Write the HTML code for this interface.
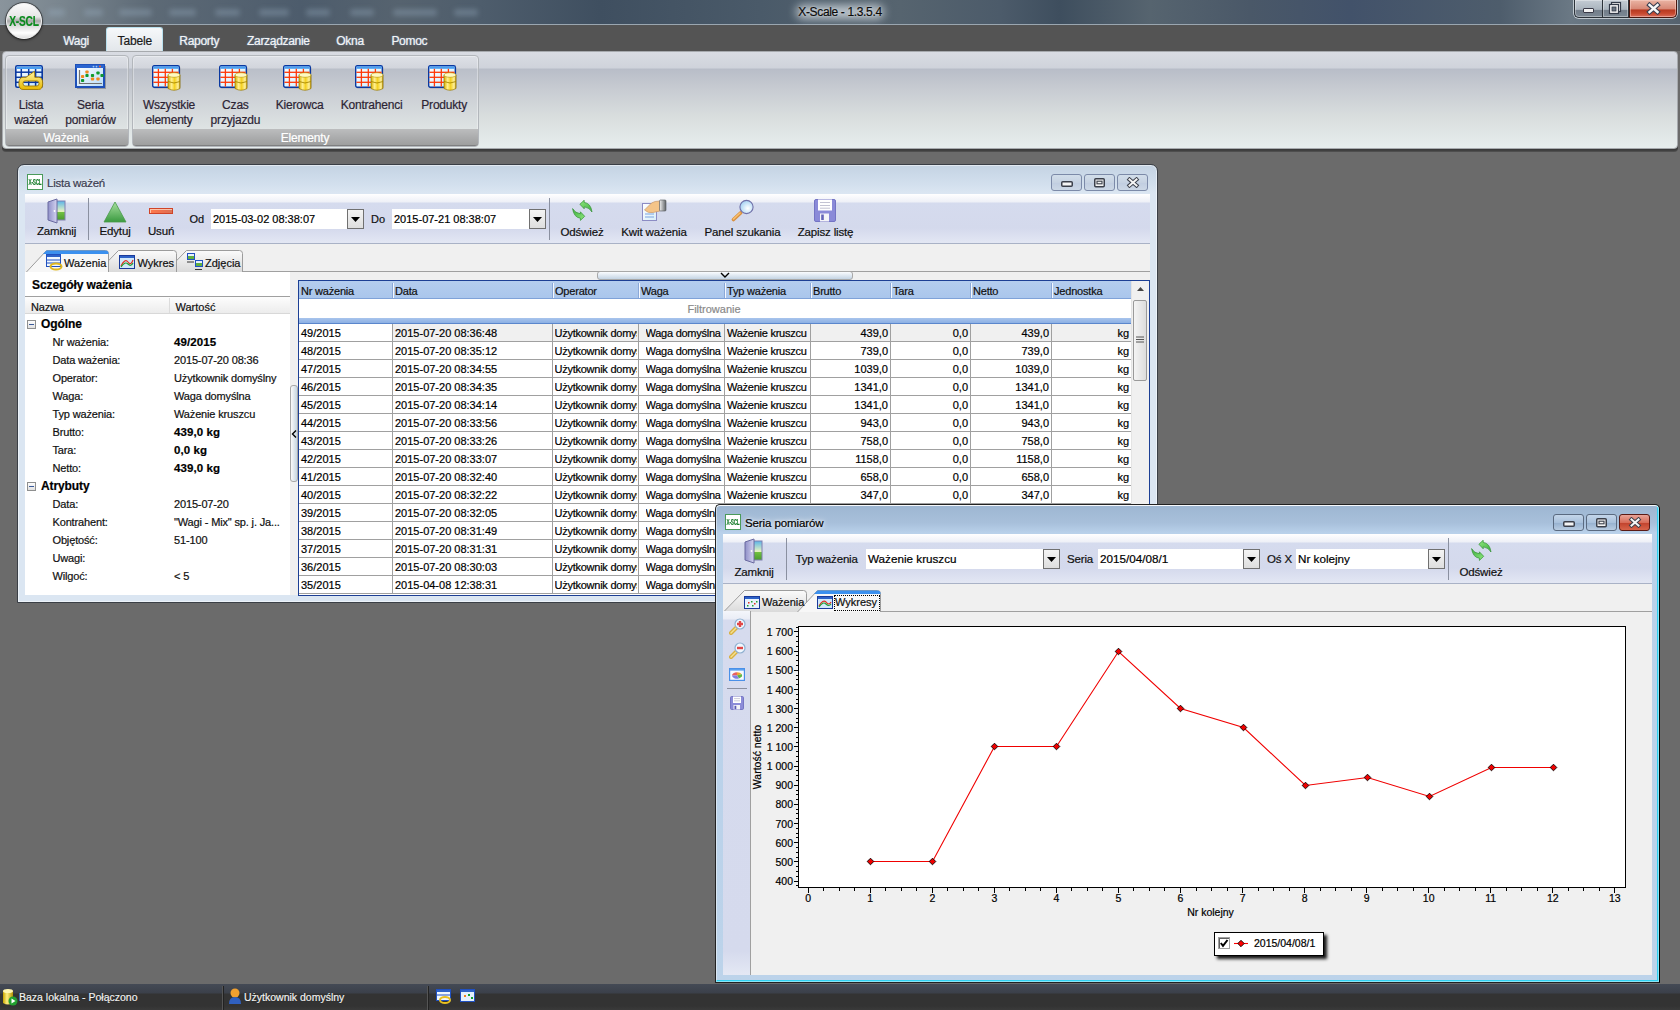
<!DOCTYPE html><html><head><meta charset="utf-8"><style>
html,body{margin:0;padding:0;}
body{width:1680px;height:1010px;overflow:hidden;position:relative;background:#6b6b6b;font-family:"Liberation Sans", sans-serif;}
div{box-sizing:border-box;-webkit-text-stroke:0.2px currentColor;}
</style></head><body>
<div style="position:absolute;left:0px;top:0px;width:1680px;height:25px;background:linear-gradient(90deg,#8a949c 0px,#7a868f 60px,#5d6a76 150px,#4d5c6c 300px,#56636f 400px,#4e5d6c 480px,#3f4f60 600px,#4a5a69 760px,#56646f 900px,#4c5b6a 1000px,#3e4e5e 1060px,#56646f 1150px,#4a5868 1250px,#42526a 1350px,#4e5d6c 1500px,#6a7884 1570px,#55626e 1680px);"></div>
<div style="position:absolute;left:0px;top:24px;width:1680px;height:1px;background:#9aa6b0;"></div>
<div style="position:absolute;left:796px;top:5px;width:88px;height:14px;background:rgba(225,232,238,0.75);filter:blur(5px);border-radius:7px;"></div>
<div style="position:absolute;left:690.00px;top:3.84px;width:300px;text-align:center;font-size:12px;line-height:16px;color:#0a0a0a;font-weight:400;white-space:pre;text-shadow:0 0 2px rgba(255,255,255,0.6);letter-spacing:-0.35px;">X-Scale - 1.3.5.4</div>
<div style="position:absolute;left:48px;top:9px;width:17px;height:7px;background:rgba(160,180,200,0.32);filter:blur(2.5px);border-radius:3px;"></div>
<div style="position:absolute;left:84px;top:9px;width:19px;height:7px;background:rgba(160,180,200,0.32);filter:blur(2.5px);border-radius:3px;"></div>
<div style="position:absolute;left:119px;top:9px;width:33px;height:7px;background:rgba(160,180,200,0.32);filter:blur(2.5px);border-radius:3px;"></div>
<div style="position:absolute;left:169px;top:9px;width:27px;height:7px;background:rgba(160,180,200,0.32);filter:blur(2.5px);border-radius:3px;"></div>
<div style="position:absolute;left:215px;top:9px;width:25px;height:7px;background:rgba(160,180,200,0.32);filter:blur(2.5px);border-radius:3px;"></div>
<div style="position:absolute;left:259px;top:9px;width:30px;height:7px;background:rgba(160,180,200,0.32);filter:blur(2.5px);border-radius:3px;"></div>
<div style="position:absolute;left:306px;top:9px;width:24px;height:7px;background:rgba(160,180,200,0.32);filter:blur(2.5px);border-radius:3px;"></div>
<div style="position:absolute;left:350px;top:9px;width:24px;height:7px;background:rgba(160,180,200,0.32);filter:blur(2.5px);border-radius:3px;"></div>
<div style="position:absolute;left:393px;top:9px;width:44px;height:7px;background:rgba(160,180,200,0.32);filter:blur(2.5px);border-radius:3px;"></div>
<div style="position:absolute;left:454px;top:9px;width:24px;height:7px;background:rgba(160,180,200,0.32);filter:blur(2.5px);border-radius:3px;"></div>
<div style="position:absolute;left:1573px;top:0px;width:105px;height:19px;background:transparent;border:1px solid rgba(230,236,240,0.7);border-top:none;border-radius:0 0 6px 6px;"></div>
<div style="position:absolute;left:1574px;top:0px;width:29px;height:18px;background:linear-gradient(#c4ccd4 0%,#aab4be 55%,#737e8a 62%,#7c8894 100%);border:1px solid #2c333a;border-top:none;border-right:none;border-radius:0 0 0 5px;box-shadow:inset 0 0 0 1px rgba(255,255,255,0.35);"></div>
<div style="position:absolute;left:1583px;top:8px;width:11px;height:5px;background:#f2f2f2;border:1px solid #3a3a48;border-radius:1px;"></div>
<div style="position:absolute;left:1602px;top:0px;width:27px;height:18px;background:linear-gradient(#c4ccd4 0%,#aab4be 55%,#737e8a 62%,#7c8894 100%);border:1px solid #2c333a;border-top:none;box-shadow:inset 0 0 0 1px rgba(255,255,255,0.35);"></div>
<svg style="position:absolute;left:1608px;top:1px" width="14" height="14" viewBox="0 0 14 14"><rect x="3.5" y="1.5" width="9" height="9" fill="#f4f4f4" stroke="#333a48" stroke-width="1.2"/><rect x="1.5" y="3.5" width="9" height="9" fill="#f4f4f4" stroke="#333a48" stroke-width="1.2"/><rect x="4" y="6" width="4" height="4" fill="#6a7480" stroke="#333a48" stroke-width="0.8"/></svg>
<div style="position:absolute;left:1629px;top:0px;width:48px;height:18px;background:linear-gradient(#eab4a4 0%,#d88a78 50%,#b83a22 60%,#c84a30 80%,#d87060 100%);border:1px solid #4a1810;border-top:none;border-radius:0 0 5px 0;box-shadow:inset 0 0 0 1px rgba(255,220,210,0.45);"></div>
<svg style="position:absolute;left:1646px;top:2px" width="15" height="13" viewBox="0 0 15 13"><path d="M3.5 3 L11.5 10 M11.5 3 L3.5 10" stroke="#3a3f50" stroke-width="4.6" stroke-linecap="square"/><path d="M3.5 3 L11.5 10 M11.5 3 L3.5 10" stroke="#f8f8f8" stroke-width="2.4" stroke-linecap="square"/></svg>
<div style="position:absolute;left:0px;top:25px;width:1680px;height:26px;background:#545454;"></div>
<div style="position:absolute;left:6px;top:3px;width:36px;height:36px;border-radius:50%;background:linear-gradient(#fbfbfb 0%,#e6e6e6 38%,#a8a8a8 50%,#d8d8d8 62%,#ffffff 85%,#e0e0e0 100%);border:1px solid #f4f4f4;box-shadow:0 0 0 1px rgba(40,40,40,0.6),0 1px 3px rgba(0,0,0,0.6);"></div>
<div style="position:absolute;left:-6.00px;top:10.80px;width:60px;text-align:center;font-size:15px;line-height:20px;color:#0b8a1e;font-weight:700;white-space:pre;letter-spacing:-0.3px;transform:scaleX(0.68);">X-SCL</div>
<div style="position:absolute;left:106px;top:27px;width:57px;height:25px;background:linear-gradient(#f6f8fa,#e2e6ea);border:1px solid #b9e0ee;border-bottom:none;border-radius:3px 3px 0 0;"></div>
<div style="position:absolute;left:63.20px;top:32.84px;font-size:12px;line-height:16px;color:#f4f4f4;font-weight:400;white-space:pre;letter-spacing:-0.3px;text-shadow:0 0 2px #6d8fb8;">Wagi</div>
<div style="position:absolute;left:117.60px;top:32.84px;font-size:12px;line-height:16px;color:#1a1a1a;font-weight:400;white-space:pre;letter-spacing:-0.15px;">Tabele</div>
<div style="position:absolute;left:179.30px;top:32.84px;font-size:12px;line-height:16px;color:#f4f4f4;font-weight:400;white-space:pre;letter-spacing:-0.3px;text-shadow:0 0 2px #6d8fb8;">Raporty</div>
<div style="position:absolute;left:247.00px;top:32.84px;font-size:12px;line-height:16px;color:#f4f4f4;font-weight:400;white-space:pre;letter-spacing:-0.3px;text-shadow:0 0 2px #6d8fb8;">Zarządzanie</div>
<div style="position:absolute;left:336.30px;top:32.84px;font-size:12px;line-height:16px;color:#f4f4f4;font-weight:400;white-space:pre;letter-spacing:-0.3px;text-shadow:0 0 2px #6d8fb8;">Okna</div>
<div style="position:absolute;left:391.40px;top:32.84px;font-size:12px;line-height:16px;color:#f4f4f4;font-weight:400;white-space:pre;letter-spacing:-0.3px;text-shadow:0 0 2px #6d8fb8;">Pomoc</div>
<div style="position:absolute;left:2px;top:51px;width:1676px;height:98px;background:linear-gradient(#d9dce3 0px,#cfd3db 16px,#b8bdc8 17px,#c6cad1 35px,#d9dede 65px,#e7eeee 97px);border:1px solid #a7aaae;border-radius:4px;box-shadow:0 1px 0 #3a3a3a,0 2px 0 #404040,0 3px 0 #4e4e4e;"></div>
<div style="position:absolute;left:5px;top:55px;width:124px;height:92px;background:linear-gradient(#dee1e7 0px,#d2d5dc 12px,#babfc9 13px,#c9cdd3 35px,#dfe4e4 74px);border:1px solid #b3b7bc;border-radius:4px;box-shadow:inset 0 0 0 1px rgba(255,255,255,0.35);"></div>
<div style="position:absolute;left:6px;top:129px;width:122px;height:17px;background:linear-gradient(#bcbdbe,#a9aaab 60%,#9e9f9f);border-bottom:1px solid #7e7f80;border-radius:0 0 3px 3px;"></div>
<div style="position:absolute;left:-84.00px;top:129.84px;width:300px;text-align:center;font-size:12px;line-height:16px;color:#ffffff;font-weight:400;white-space:pre;letter-spacing:-0.2px;">Ważenia</div>
<div style="position:absolute;left:132px;top:55px;width:347px;height:92px;background:linear-gradient(#dee1e7 0px,#d2d5dc 12px,#babfc9 13px,#c9cdd3 35px,#dfe4e4 74px);border:1px solid #b3b7bc;border-radius:4px;box-shadow:inset 0 0 0 1px rgba(255,255,255,0.35);"></div>
<div style="position:absolute;left:133px;top:129px;width:345px;height:17px;background:linear-gradient(#bcbdbe,#a9aaab 60%,#9e9f9f);border-bottom:1px solid #7e7f80;border-radius:0 0 3px 3px;"></div>
<div style="position:absolute;left:155.00px;top:129.84px;width:300px;text-align:center;font-size:12px;line-height:16px;color:#ffffff;font-weight:400;white-space:pre;letter-spacing:-0.2px;">Elementy</div>
<svg style="position:absolute;left:15px;top:65px" width="30" height="27" viewBox="0 0 30 27"><defs><linearGradient id="cel2" x1="0" y1="0" x2="1" y2="1"><stop offset="0" stop-color="#ffffff"/><stop offset="1" stop-color="#bfe4ff"/></linearGradient><linearGradient id="yl" x1="0" y1="0" x2="0" y2="1"><stop offset="0" stop-color="#fff6a0"/><stop offset="1" stop-color="#e8b800"/></linearGradient></defs><rect x="0.8" y="0.8" width="26.4" height="21.4" rx="1.5" fill="url(#cel2)" stroke="#0a38a0" stroke-width="1.6"/><rect x="1.6" y="1.6" width="24.8" height="2.4" fill="#4a9ef0"/><line x1="1" y1="7.2" x2="27" y2="7.2" stroke="#0a38a0" stroke-width="1.5"/><line x1="1" y1="12.3" x2="27" y2="12.3" stroke="#0a38a0" stroke-width="1.5"/><line x1="1" y1="17.3" x2="27" y2="17.3" stroke="#0a38a0" stroke-width="1.5"/><line x1="6.3" y1="4" x2="6.3" y2="22" stroke="#0a38a0" stroke-width="1.5"/><line x1="13.7" y1="4" x2="13.7" y2="22" stroke="#0a38a0" stroke-width="1.5"/><line x1="20.6" y1="4" x2="20.6" y2="22" stroke="#0a38a0" stroke-width="1.5"/><path d="M8 12.3 L11 12.3 L19.5 6.3 L19.8 12.3 L23.5 12.3 Q27.7 12.3 27.7 18.4 Q27.7 24.5 23.5 24.5 L8 24.5 Q3.9 24.5 3.9 18.4 Q3.9 12.3 8 12.3 Z M10 16 L22 16 Q24 16 24 18.5 Q24 21 22 21 L10 21 Q8 21 8 18.5 Q8 16 10 16 Z" fill="url(#yl)" fill-rule="evenodd" stroke="#a07800" stroke-width="0.9"/></svg>
<svg style="position:absolute;left:75px;top:64px" width="32" height="27" viewBox="0 0 32 27"><defs><linearGradient id="sp" x1="0" y1="0" x2="1" y2="1"><stop offset="0" stop-color="#ffffff"/><stop offset="1" stop-color="#b8dcf8"/></linearGradient></defs><rect x="2" y="2" width="29" height="23" fill="rgba(0,0,0,0.25)"/><rect x="1" y="1" width="28" height="22" fill="url(#sp)" stroke="#1e50b8" stroke-width="2"/><rect x="1" y="1" width="28" height="3" fill="#2a64d0"/><circle cx="25" cy="2.6" r="1" fill="#f06030"/><circle cx="21.5" cy="2.6" r="0.9" fill="#a0c8f0"/><circle cx="18.5" cy="2.6" r="0.9" fill="#a0c8f0"/><path d="M4.5 6 L4.5 19.5 L27 19.5" fill="none" stroke="#707070" stroke-width="1.2"/><rect x="10.4" y="6.4" width="3.2" height="3.2" rx="0.8" fill="#f08a20"/><rect x="6.0" y="10.9" width="3.2" height="3.2" rx="0.8" fill="#f08a20"/><rect x="10.4" y="9.9" width="3.2" height="3.2" rx="0.8" fill="#109a30"/><rect x="15.9" y="9.9" width="3.2" height="3.2" rx="0.8" fill="#109a30"/><rect x="21.4" y="7.4" width="3.2" height="3.2" rx="0.8" fill="#109a30"/><rect x="15.9" y="13.4" width="3.2" height="3.2" rx="0.8" fill="#f08a20"/><rect x="6.0" y="14.9" width="3.2" height="3.2" rx="0.8" fill="#109a30"/><rect x="21.4" y="13.4" width="3.2" height="3.2" rx="0.8" fill="#f08a20"/><rect x="25.4" y="9.9" width="3.2" height="3.2" rx="0.8" fill="#109a30"/></svg>
<svg style="position:absolute;left:152px;top:65px" width="30" height="27" viewBox="0 0 30 27"><defs><linearGradient id="cy" x1="0" x2="1"><stop offset="0" stop-color="#d8b000"/><stop offset="0.3" stop-color="#fff090"/><stop offset="0.55" stop-color="#f4d020"/><stop offset="0.85" stop-color="#fff2a0"/><stop offset="1" stop-color="#b89000"/></linearGradient><linearGradient id="cel" x1="0" y1="0" x2="1" y2="1"><stop offset="0" stop-color="#ffffff"/><stop offset="1" stop-color="#c8ecff"/></linearGradient></defs><rect x="1.5" y="1.5" width="27" height="22" rx="1.5" fill="rgba(0,0,0,0.18)"/><rect x="0.7" y="0.7" width="26.6" height="21.6" rx="1.5" fill="url(#cel)" stroke="#0a38a0" stroke-width="1.4"/><rect x="1.4" y="1.4" width="25.2" height="2.4" fill="#4a9ef0"/><line x1="1.4" y1="7.3" x2="26.6" y2="7.3" stroke="#ff3808" stroke-width="1.3"/><line x1="1.4" y1="12.3" x2="26.6" y2="12.3" stroke="#ff3808" stroke-width="1.3"/><line x1="1.4" y1="17.3" x2="26.6" y2="17.3" stroke="#ff3808" stroke-width="1.3"/><line x1="6.4" y1="3.8" x2="6.4" y2="21.6" stroke="#ff3808" stroke-width="1.3"/><line x1="13.3" y1="3.8" x2="13.3" y2="21.6" stroke="#ff3808" stroke-width="1.3"/><line x1="20.4" y1="3.8" x2="20.4" y2="21.6" stroke="#ff3808" stroke-width="1.3"/><path d="M16 10 Q22 7 28 10 L28 23.5 Q22 27 16 23.5 Z" fill="url(#cy)" stroke="#9a7a00" stroke-width="0.7"/><ellipse cx="22" cy="10" rx="6" ry="2.3" fill="#fff8c0" stroke="#b09000" stroke-width="0.6"/><path d="M16 16.5 Q22 19.5 28 16.5" fill="none" stroke="#a88800" stroke-width="0.9"/></svg>
<svg style="position:absolute;left:219px;top:65px" width="30" height="27" viewBox="0 0 30 27"><defs><linearGradient id="cy" x1="0" x2="1"><stop offset="0" stop-color="#d8b000"/><stop offset="0.3" stop-color="#fff090"/><stop offset="0.55" stop-color="#f4d020"/><stop offset="0.85" stop-color="#fff2a0"/><stop offset="1" stop-color="#b89000"/></linearGradient><linearGradient id="cel" x1="0" y1="0" x2="1" y2="1"><stop offset="0" stop-color="#ffffff"/><stop offset="1" stop-color="#c8ecff"/></linearGradient></defs><rect x="1.5" y="1.5" width="27" height="22" rx="1.5" fill="rgba(0,0,0,0.18)"/><rect x="0.7" y="0.7" width="26.6" height="21.6" rx="1.5" fill="url(#cel)" stroke="#0a38a0" stroke-width="1.4"/><rect x="1.4" y="1.4" width="25.2" height="2.4" fill="#4a9ef0"/><line x1="1.4" y1="7.3" x2="26.6" y2="7.3" stroke="#ff3808" stroke-width="1.3"/><line x1="1.4" y1="12.3" x2="26.6" y2="12.3" stroke="#ff3808" stroke-width="1.3"/><line x1="1.4" y1="17.3" x2="26.6" y2="17.3" stroke="#ff3808" stroke-width="1.3"/><line x1="6.4" y1="3.8" x2="6.4" y2="21.6" stroke="#ff3808" stroke-width="1.3"/><line x1="13.3" y1="3.8" x2="13.3" y2="21.6" stroke="#ff3808" stroke-width="1.3"/><line x1="20.4" y1="3.8" x2="20.4" y2="21.6" stroke="#ff3808" stroke-width="1.3"/><path d="M16 10 Q22 7 28 10 L28 23.5 Q22 27 16 23.5 Z" fill="url(#cy)" stroke="#9a7a00" stroke-width="0.7"/><ellipse cx="22" cy="10" rx="6" ry="2.3" fill="#fff8c0" stroke="#b09000" stroke-width="0.6"/><path d="M16 16.5 Q22 19.5 28 16.5" fill="none" stroke="#a88800" stroke-width="0.9"/></svg>
<svg style="position:absolute;left:283px;top:65px" width="30" height="27" viewBox="0 0 30 27"><defs><linearGradient id="cy" x1="0" x2="1"><stop offset="0" stop-color="#d8b000"/><stop offset="0.3" stop-color="#fff090"/><stop offset="0.55" stop-color="#f4d020"/><stop offset="0.85" stop-color="#fff2a0"/><stop offset="1" stop-color="#b89000"/></linearGradient><linearGradient id="cel" x1="0" y1="0" x2="1" y2="1"><stop offset="0" stop-color="#ffffff"/><stop offset="1" stop-color="#c8ecff"/></linearGradient></defs><rect x="1.5" y="1.5" width="27" height="22" rx="1.5" fill="rgba(0,0,0,0.18)"/><rect x="0.7" y="0.7" width="26.6" height="21.6" rx="1.5" fill="url(#cel)" stroke="#0a38a0" stroke-width="1.4"/><rect x="1.4" y="1.4" width="25.2" height="2.4" fill="#4a9ef0"/><line x1="1.4" y1="7.3" x2="26.6" y2="7.3" stroke="#ff3808" stroke-width="1.3"/><line x1="1.4" y1="12.3" x2="26.6" y2="12.3" stroke="#ff3808" stroke-width="1.3"/><line x1="1.4" y1="17.3" x2="26.6" y2="17.3" stroke="#ff3808" stroke-width="1.3"/><line x1="6.4" y1="3.8" x2="6.4" y2="21.6" stroke="#ff3808" stroke-width="1.3"/><line x1="13.3" y1="3.8" x2="13.3" y2="21.6" stroke="#ff3808" stroke-width="1.3"/><line x1="20.4" y1="3.8" x2="20.4" y2="21.6" stroke="#ff3808" stroke-width="1.3"/><path d="M16 10 Q22 7 28 10 L28 23.5 Q22 27 16 23.5 Z" fill="url(#cy)" stroke="#9a7a00" stroke-width="0.7"/><ellipse cx="22" cy="10" rx="6" ry="2.3" fill="#fff8c0" stroke="#b09000" stroke-width="0.6"/><path d="M16 16.5 Q22 19.5 28 16.5" fill="none" stroke="#a88800" stroke-width="0.9"/></svg>
<svg style="position:absolute;left:355px;top:65px" width="30" height="27" viewBox="0 0 30 27"><defs><linearGradient id="cy" x1="0" x2="1"><stop offset="0" stop-color="#d8b000"/><stop offset="0.3" stop-color="#fff090"/><stop offset="0.55" stop-color="#f4d020"/><stop offset="0.85" stop-color="#fff2a0"/><stop offset="1" stop-color="#b89000"/></linearGradient><linearGradient id="cel" x1="0" y1="0" x2="1" y2="1"><stop offset="0" stop-color="#ffffff"/><stop offset="1" stop-color="#c8ecff"/></linearGradient></defs><rect x="1.5" y="1.5" width="27" height="22" rx="1.5" fill="rgba(0,0,0,0.18)"/><rect x="0.7" y="0.7" width="26.6" height="21.6" rx="1.5" fill="url(#cel)" stroke="#0a38a0" stroke-width="1.4"/><rect x="1.4" y="1.4" width="25.2" height="2.4" fill="#4a9ef0"/><line x1="1.4" y1="7.3" x2="26.6" y2="7.3" stroke="#ff3808" stroke-width="1.3"/><line x1="1.4" y1="12.3" x2="26.6" y2="12.3" stroke="#ff3808" stroke-width="1.3"/><line x1="1.4" y1="17.3" x2="26.6" y2="17.3" stroke="#ff3808" stroke-width="1.3"/><line x1="6.4" y1="3.8" x2="6.4" y2="21.6" stroke="#ff3808" stroke-width="1.3"/><line x1="13.3" y1="3.8" x2="13.3" y2="21.6" stroke="#ff3808" stroke-width="1.3"/><line x1="20.4" y1="3.8" x2="20.4" y2="21.6" stroke="#ff3808" stroke-width="1.3"/><path d="M16 10 Q22 7 28 10 L28 23.5 Q22 27 16 23.5 Z" fill="url(#cy)" stroke="#9a7a00" stroke-width="0.7"/><ellipse cx="22" cy="10" rx="6" ry="2.3" fill="#fff8c0" stroke="#b09000" stroke-width="0.6"/><path d="M16 16.5 Q22 19.5 28 16.5" fill="none" stroke="#a88800" stroke-width="0.9"/></svg>
<svg style="position:absolute;left:428px;top:65px" width="30" height="27" viewBox="0 0 30 27"><defs><linearGradient id="cy" x1="0" x2="1"><stop offset="0" stop-color="#d8b000"/><stop offset="0.3" stop-color="#fff090"/><stop offset="0.55" stop-color="#f4d020"/><stop offset="0.85" stop-color="#fff2a0"/><stop offset="1" stop-color="#b89000"/></linearGradient><linearGradient id="cel" x1="0" y1="0" x2="1" y2="1"><stop offset="0" stop-color="#ffffff"/><stop offset="1" stop-color="#c8ecff"/></linearGradient></defs><rect x="1.5" y="1.5" width="27" height="22" rx="1.5" fill="rgba(0,0,0,0.18)"/><rect x="0.7" y="0.7" width="26.6" height="21.6" rx="1.5" fill="url(#cel)" stroke="#0a38a0" stroke-width="1.4"/><rect x="1.4" y="1.4" width="25.2" height="2.4" fill="#4a9ef0"/><line x1="1.4" y1="7.3" x2="26.6" y2="7.3" stroke="#ff3808" stroke-width="1.3"/><line x1="1.4" y1="12.3" x2="26.6" y2="12.3" stroke="#ff3808" stroke-width="1.3"/><line x1="1.4" y1="17.3" x2="26.6" y2="17.3" stroke="#ff3808" stroke-width="1.3"/><line x1="6.4" y1="3.8" x2="6.4" y2="21.6" stroke="#ff3808" stroke-width="1.3"/><line x1="13.3" y1="3.8" x2="13.3" y2="21.6" stroke="#ff3808" stroke-width="1.3"/><line x1="20.4" y1="3.8" x2="20.4" y2="21.6" stroke="#ff3808" stroke-width="1.3"/><path d="M16 10 Q22 7 28 10 L28 23.5 Q22 27 16 23.5 Z" fill="url(#cy)" stroke="#9a7a00" stroke-width="0.7"/><ellipse cx="22" cy="10" rx="6" ry="2.3" fill="#fff8c0" stroke="#b09000" stroke-width="0.6"/><path d="M16 16.5 Q22 19.5 28 16.5" fill="none" stroke="#a88800" stroke-width="0.9"/></svg>
<div style="position:absolute;left:-119.00px;top:96.84px;width:300px;text-align:center;font-size:12px;line-height:16px;color:#2c2434;font-weight:400;white-space:pre;letter-spacing:-0.2px;">Lista</div>
<div style="position:absolute;left:-119.00px;top:111.84px;width:300px;text-align:center;font-size:12px;line-height:16px;color:#2c2434;font-weight:400;white-space:pre;letter-spacing:-0.2px;">ważeń</div>
<div style="position:absolute;left:-59.50px;top:96.84px;width:300px;text-align:center;font-size:12px;line-height:16px;color:#2c2434;font-weight:400;white-space:pre;letter-spacing:-0.2px;">Seria</div>
<div style="position:absolute;left:-59.50px;top:111.84px;width:300px;text-align:center;font-size:12px;line-height:16px;color:#2c2434;font-weight:400;white-space:pre;letter-spacing:-0.2px;">pomiarów</div>
<div style="position:absolute;left:19.00px;top:96.84px;width:300px;text-align:center;font-size:12px;line-height:16px;color:#2c2434;font-weight:400;white-space:pre;letter-spacing:-0.2px;">Wszystkie</div>
<div style="position:absolute;left:19.00px;top:111.84px;width:300px;text-align:center;font-size:12px;line-height:16px;color:#2c2434;font-weight:400;white-space:pre;letter-spacing:-0.2px;">elementy</div>
<div style="position:absolute;left:85.40px;top:96.84px;width:300px;text-align:center;font-size:12px;line-height:16px;color:#2c2434;font-weight:400;white-space:pre;letter-spacing:-0.2px;">Czas</div>
<div style="position:absolute;left:85.40px;top:111.84px;width:300px;text-align:center;font-size:12px;line-height:16px;color:#2c2434;font-weight:400;white-space:pre;letter-spacing:-0.2px;">przyjazdu</div>
<div style="position:absolute;left:149.70px;top:96.84px;width:300px;text-align:center;font-size:12px;line-height:16px;color:#2c2434;font-weight:400;white-space:pre;letter-spacing:-0.2px;">Kierowca</div>
<div style="position:absolute;left:221.60px;top:96.84px;width:300px;text-align:center;font-size:12px;line-height:16px;color:#2c2434;font-weight:400;white-space:pre;letter-spacing:-0.2px;">Kontrahenci</div>
<div style="position:absolute;left:294.20px;top:96.84px;width:300px;text-align:center;font-size:12px;line-height:16px;color:#2c2434;font-weight:400;white-space:pre;letter-spacing:-0.2px;">Produkty</div>
<div style="position:absolute;left:0px;top:984px;width:1680px;height:26px;background:linear-gradient(#444a55 0px,#3b404a 9px,#333333 10px,#333333 22px,#3a3a3a 26px);"></div>
<svg style="position:absolute;left:2px;top:988px" width="16" height="18" viewBox="0 0 16 18"><defs><linearGradient id="cy2" x1="0" x2="1"><stop offset="0" stop-color="#c8a400"/><stop offset="0.4" stop-color="#fff080"/><stop offset="1" stop-color="#b09000"/></linearGradient></defs><path d="M1 3 Q6 0 11 3 L11 15 Q6 18 1 15 Z" fill="url(#cy2)"/><ellipse cx="6" cy="3" rx="5" ry="2" fill="#fff6b0"/><circle cx="11" cy="13" r="4.5" fill="#22a030"/><path d="M9.5 10.5 L13.5 13 L9.5 15.5 Z" fill="#fff"/></svg>
<div style="position:absolute;left:19.00px;top:990.36px;font-size:10.5px;line-height:14px;color:#f4f4f4;font-weight:400;white-space:pre;text-shadow:0 0 1px #000;">Baza lokalna - Połączono</div>
<div style="position:absolute;left:222px;top:986px;width:2px;height:24px;background:#555;border-right:1px solid #222;"></div>
<svg style="position:absolute;left:228px;top:988px" width="14" height="17" viewBox="0 0 14 17"><circle cx="7" cy="5" r="4.5" fill="#f0a030"/><path d="M1 16 Q1 9 7 9 Q13 9 13 16 Z" fill="#3060c0"/></svg>
<div style="position:absolute;left:244.00px;top:990.36px;font-size:10.5px;line-height:14px;color:#f4f4f4;font-weight:400;white-space:pre;text-shadow:0 0 1px #000;">Użytkownik domyślny</div>
<div style="position:absolute;left:427px;top:986px;width:2px;height:24px;background:#555;border-right:1px solid #222;"></div>
<svg style="position:absolute;left:436px;top:989px" width="16" height="15" viewBox="0 0 16 15"><rect x="0.5" y="0.5" width="14" height="11" fill="#f0f8ff" stroke="#2050c0"/><rect x="1" y="1" width="13" height="2" fill="#2d62c8"/><line x1="1" y1="6" x2="14" y2="6" stroke="#2050c0"/><ellipse cx="9" cy="11" rx="5" ry="3" fill="none" stroke="#e8c020" stroke-width="2"/></svg>
<svg style="position:absolute;left:460px;top:989px" width="16" height="14" viewBox="0 0 16 14"><rect x="0.5" y="0.5" width="14" height="12" fill="#e4f0fc" stroke="#2050c0"/><rect x="1" y="1" width="13" height="2" fill="#2d62c8"/><rect x="4" y="6" width="2" height="2" fill="#f08020"/><rect x="8" y="5" width="2" height="2" fill="#10a030"/><rect x="11" y="8" width="2" height="2" fill="#10a030"/></svg>
<div style="position:absolute;left:17px;top:164px;width:1141px;height:439px;background:linear-gradient(#c4d3e3 0px,#d3e0ee 20px,#dbe6f2 28px,#dbe6f2 100%);border:1px solid #3a3f46;border-radius:7px 7px 0 0;box-shadow:inset 0 0 0 1px rgba(255,255,255,0.5);"></div>
<div style="position:absolute;left:27px;top:174px;width:16px;height:16px;background:#fff;border:1px solid #4a9a5a;"></div>
<div style="position:absolute;left:20.00px;top:176.55px;width:30px;text-align:center;font-size:8.5px;line-height:11px;color:#1a7e2e;font-weight:700;white-space:pre;letter-spacing:-0.4px;transform:scaleX(0.55);">X-SCL</div>
<div style="position:absolute;left:47.00px;top:175.52px;font-size:11.5px;line-height:15px;color:#3c3c50;font-weight:400;white-space:pre;letter-spacing:-0.25px;text-shadow:0 0 6px #fff;">Lista ważeń</div>
<div style="position:absolute;left:1051px;top:174px;width:31px;height:17px;background:linear-gradient(#d2deea,#c6d2e2 50%,#c0cde0 51%,#ccd8e6);border:1px solid #7c8aa8;border-radius:3px;"></div>
<div style="position:absolute;left:1084px;top:174px;width:31px;height:17px;background:linear-gradient(#d2deea,#c6d2e2 50%,#c0cde0 51%,#ccd8e6);border:1px solid #7c8aa8;border-radius:3px;"></div>
<div style="position:absolute;left:1117px;top:174px;width:31px;height:17px;background:linear-gradient(#d2deea,#c6d2e2 50%,#c0cde0 51%,#ccd8e6);border:1px solid #7c8aa8;border-radius:3px;"></div>
<svg style="position:absolute;left:1061px;top:181px" width="13" height="7" viewBox="0 0 13 7"><rect x="0.75" y="0.75" width="10.5" height="4.5" rx="1" fill="#f4f4f4" stroke="#3a3f4a" stroke-width="1.5"/></svg>
<svg style="position:absolute;left:1094px;top:178px" width="13" height="10" viewBox="0 0 13 10"><rect x="0.75" y="0.75" width="9.5" height="8" rx="1" fill="#f4f4f4" stroke="#3a3f4a" stroke-width="1.5"/><rect x="3" y="3.2" width="5" height="2.6" fill="none" stroke="#3a3f4a" stroke-width="1.1"/></svg>
<svg style="position:absolute;left:1126px;top:177px" width="14" height="11" viewBox="0 0 14 11"><path d="M3.5 2.5 L10.5 8.5 M10.5 2.5 L3.5 8.5" stroke="#3a3f4a" stroke-width="4" stroke-linecap="square"/><path d="M3.5 2.5 L10.5 8.5 M10.5 2.5 L3.5 8.5" stroke="#f6f6f6" stroke-width="2" stroke-linecap="square"/></svg>
<div style="position:absolute;left:25px;top:194px;width:1125px;height:401px;background:#f0f0f0;"></div>
<div style="position:absolute;left:25px;top:194px;width:1125px;height:50px;background:linear-gradient(#ffffff 0px,#eef0f7 8px,#d5dbee 9px,#d4d9ec 34px,#e3e7f4 49px);border-bottom:1px solid #a9b2c6;"></div>
<svg style="position:absolute;left:47px;top:198px" width="20" height="26" viewBox="0 0 20 26"><defs><linearGradient id="dr" x1="0" x2="1"><stop offset="0" stop-color="#8f8fc8"/><stop offset="1" stop-color="#d4d4f0"/></linearGradient><linearGradient id="sky" x1="0" y1="0" x2="0" y2="1"><stop offset="0" stop-color="#5ab4e8"/><stop offset="0.55" stop-color="#e8f4c0"/><stop offset="0.6" stop-color="#70c040"/><stop offset="1" stop-color="#4a9a30"/></linearGradient></defs><rect x="9" y="3" width="9" height="19" fill="url(#sky)" stroke="#8080b0" stroke-width="1"/><path d="M1 4 L10 1 L10 25 L1 22 Z" fill="url(#dr)" stroke="#6a6aa0" stroke-width="1"/><circle cx="7.5" cy="13" r="0.9" fill="#fff"/></svg>
<div style="position:absolute;left:-93.50px;top:224.02px;width:300px;text-align:center;font-size:11.5px;line-height:15px;color:#101010;font-weight:400;white-space:pre;letter-spacing:-0.15px;">Zamknij</div>
<div style="position:absolute;left:88px;top:198px;width:1px;height:42px;background:#8a90a0;"></div>
<svg style="position:absolute;left:103px;top:201px" width="24" height="22" viewBox="0 0 24 22"><defs><linearGradient id="tr" x1="0" y1="0" x2="0" y2="1"><stop offset="0" stop-color="#a8e0a0"/><stop offset="1" stop-color="#3a9a40"/></linearGradient></defs><path d="M12 1 L23 21 L1 21 Z" fill="url(#tr)" stroke="#4a9a4a" stroke-width="0.8"/></svg>
<div style="position:absolute;left:-35.00px;top:224.02px;width:300px;text-align:center;font-size:11.5px;line-height:15px;color:#101010;font-weight:400;white-space:pre;letter-spacing:-0.15px;">Edytuj</div>
<div style="position:absolute;left:149px;top:208px;width:24px;height:6px;background:linear-gradient(90deg,#ff7a4c,#e87050 70%,#d87458);border:1px solid #d04428;box-shadow:inset 1px 1px 0 rgba(255,230,210,0.7);"></div>
<div style="position:absolute;left:11.00px;top:224.02px;width:300px;text-align:center;font-size:11.5px;line-height:15px;color:#101010;font-weight:400;white-space:pre;letter-spacing:-0.15px;">Usuń</div>
<div style="position:absolute;left:189.50px;top:212.19px;font-size:11px;line-height:14px;color:#101010;font-weight:400;white-space:pre;">Od</div>
<div style="position:absolute;left:211px;top:209px;width:153px;height:20px;background:#fff;"></div>
<div style="position:absolute;left:213.00px;top:212.19px;font-size:11px;line-height:14px;color:#000;font-weight:400;white-space:pre;">2015-03-02 08:38:07</div>
<div style="position:absolute;left:347px;top:209px;width:17px;height:20px;background:linear-gradient(#f4f4f4,#dedede);border:1px solid #707070;"></div>
<svg style="position:absolute;left:351px;top:217px" width="9" height="5" viewBox="0 0 9 5"><path d="M0 0 L9 0 L4.5 5 Z" fill="#000"/></svg>
<div style="position:absolute;left:371.00px;top:212.19px;font-size:11px;line-height:14px;color:#101010;font-weight:400;white-space:pre;">Do</div>
<div style="position:absolute;left:392px;top:209px;width:154px;height:20px;background:#fff;"></div>
<div style="position:absolute;left:394.00px;top:212.19px;font-size:11px;line-height:14px;color:#000;font-weight:400;white-space:pre;">2015-07-21 08:38:07</div>
<div style="position:absolute;left:529px;top:209px;width:17px;height:20px;background:linear-gradient(#f4f4f4,#dedede);border:1px solid #707070;"></div>
<svg style="position:absolute;left:533px;top:217px" width="9" height="5" viewBox="0 0 9 5"><path d="M0 0 L9 0 L4.5 5 Z" fill="#000"/></svg>
<div style="position:absolute;left:549px;top:198px;width:1px;height:42px;background:#8a90a0;"></div>
<svg style="position:absolute;left:572px;top:200px" width="23" height="23" viewBox="0 0 23 23"><defs><linearGradient id="ra" x1="0" y1="0" x2="1" y2="1"><stop offset="0" stop-color="#90e880"/><stop offset="1" stop-color="#3cae3c"/></linearGradient></defs><path d="M7.9 4.3 L12.2 0.2 L12.2 2.4 Q18.8 3.2 20 12 Q17.5 7.5 12.2 6.8 L12.2 8.8 Z" fill="url(#ra)" stroke="#2f8f2f" stroke-width="0.7" stroke-linejoin="round"/><path d="M7.9 4.3 L12.2 0.2 L12.2 2.4 Q18.8 3.2 20 12 Q17.5 7.5 12.2 6.8 L12.2 8.8 Z" transform="rotate(180 10.3 10.3)" fill="url(#ra)" stroke="#2f8f2f" stroke-width="0.7" stroke-linejoin="round"/></svg>
<div style="position:absolute;left:432.00px;top:224.52px;width:300px;text-align:center;font-size:11.5px;line-height:15px;color:#101010;font-weight:400;white-space:pre;letter-spacing:-0.15px;">Odśwież</div>
<svg style="position:absolute;left:641px;top:199px" width="27" height="23" viewBox="0 0 27 23"><defs><linearGradient id="dc" x1="0" y1="0" x2="1" y2="1"><stop offset="0" stop-color="#ffffff"/><stop offset="1" stop-color="#d8eef8"/></linearGradient><linearGradient id="cf" x1="0" x2="1"><stop offset="0" stop-color="#f0f0f0"/><stop offset="1" stop-color="#606468"/></linearGradient></defs><rect x="1.5" y="4.5" width="14" height="17" fill="url(#dc)" stroke="#8c8cc4"/><line x1="4" y1="15" x2="13" y2="15" stroke="#7aa4e0"/><line x1="4" y1="18" x2="13" y2="18" stroke="#7aa4e0"/><path d="M3.5 11 L10.5 4 Q13.5 2 19 2 L19 12 L12 13.5 Q7 14.5 3.5 11 Z" fill="#f4c488" stroke="#c89868" stroke-width="0.7"/><rect x="18.5" y="1" width="6.5" height="11" rx="1" fill="url(#cf)" stroke="#505458" stroke-width="0.6"/></svg>
<div style="position:absolute;left:504.00px;top:224.52px;width:300px;text-align:center;font-size:11.5px;line-height:15px;color:#101010;font-weight:400;white-space:pre;letter-spacing:-0.15px;">Kwit ważenia</div>
<svg style="position:absolute;left:731px;top:199px" width="24" height="23" viewBox="0 0 24 23"><defs><radialGradient id="gl" cx="0.6" cy="0.6" r="0.6"><stop offset="0" stop-color="#ffffff"/><stop offset="1" stop-color="#a8d4f4"/></radialGradient></defs><line x1="2.5" y1="20.5" x2="9.5" y2="14" stroke="#d89040" stroke-width="3.6" stroke-linecap="round"/><line x1="2.5" y1="20" x2="9" y2="14" stroke="#f8c070" stroke-width="1.6" stroke-linecap="round"/><circle cx="15.5" cy="8" r="6.6" fill="url(#gl)" stroke="#7070a8" stroke-width="1.1"/></svg>
<div style="position:absolute;left:592.50px;top:224.52px;width:300px;text-align:center;font-size:11.5px;line-height:15px;color:#101010;font-weight:400;white-space:pre;letter-spacing:-0.15px;">Panel szukania</div>
<svg style="position:absolute;left:814px;top:199px" width="22" height="23" viewBox="0 0 22 23"><rect x="0.5" y="0.5" width="21" height="22" rx="1.5" fill="#8a8ad8" stroke="#7474c4"/><rect x="4" y="0.5" width="14" height="11" fill="#ffffff"/><line x1="6" y1="3.5" x2="16" y2="3.5" stroke="#b4b4c8" stroke-width="0.8"/><line x1="6" y1="6.5" x2="16" y2="6.5" stroke="#b4b4c8" stroke-width="0.8"/><line x1="6" y1="9.2" x2="16" y2="9.2" stroke="#b4b4c8" stroke-width="0.8"/><rect x="6" y="14.5" width="9" height="8" fill="#f4f4f8"/><rect x="7.2" y="15.5" width="2.6" height="5.5" fill="#6464b8"/></svg>
<div style="position:absolute;left:675.50px;top:224.52px;width:300px;text-align:center;font-size:11.5px;line-height:15px;color:#101010;font-weight:400;white-space:pre;letter-spacing:-0.15px;">Zapisz listę</div>
<div style="position:absolute;left:25px;top:244px;width:1125px;height:28px;background:#f0f0f0;"></div>
<div style="position:absolute;left:108px;top:271px;width:1042px;height:1px;background:#a0a0a0;"></div>
<svg style="position:absolute;left:165px;top:250px" width="79" height="23" viewBox="0 0 79 23"><defs><linearGradient id="tgb" x1="0" y1="0" x2="0" y2="1"><stop offset="0" stop-color="#fbfbfb"/><stop offset="1" stop-color="#dadada"/></linearGradient></defs><path d="M0.5 22 L21.5 0.5 L74.5 0.5 Q77.5 0.5 77.5 3.5 L77.5 22" fill="url(#tgb)" stroke="#9c9c9c" stroke-width="1"/></svg>
<svg style="position:absolute;left:97px;top:250px" width="81" height="23" viewBox="0 0 81 23"><defs><linearGradient id="tga" x1="0" y1="0" x2="0" y2="1"><stop offset="0" stop-color="#fbfbfb"/><stop offset="1" stop-color="#dadada"/></linearGradient></defs><path d="M0.5 22 L21.5 0.5 L76.5 0.5 Q79.5 0.5 79.5 3.5 L79.5 22" fill="url(#tga)" stroke="#9c9c9c" stroke-width="1"/></svg>
<svg style="position:absolute;left:25px;top:250px" width="85" height="24" viewBox="0 0 85 24"><defs><linearGradient id="tgc" x1="0" y1="0" x2="0" y2="1"><stop offset="0" stop-color="#fbfbfb"/><stop offset="1" stop-color="#dadada"/></linearGradient></defs><path d="M0.5 23 L21.5 0.5 L80.5 0.5 Q83.5 0.5 83.5 3.5 L83.5 23" fill="#f7f7f7" stroke="#9c9c9c" stroke-width="1"/><path d="M21.5 0.5 L80.5 0.5 Q83.5 0.5 83.5 3.5 L83.5 4 L18 4 Z" fill="#3b90ee"/></svg>
<svg style="position:absolute;left:46px;top:254px" width="18" height="17" viewBox="0 0 18 17"><rect x="0.5" y="0.5" width="14" height="12" fill="#f0f8ff" stroke="#2050c0"/><rect x="1" y="1" width="13" height="2" fill="#2d62c8"/><line x1="1" y1="6" x2="14" y2="6" stroke="#2050c0"/><line x1="1" y1="9" x2="14" y2="9" stroke="#2050c0"/><ellipse cx="10" cy="12.5" rx="5.5" ry="3" fill="none" stroke="#e0b820" stroke-width="2"/></svg>
<div style="position:absolute;left:64.00px;top:256.19px;font-size:11px;line-height:14px;color:#101010;font-weight:400;white-space:pre;">Ważenia</div>
<svg style="position:absolute;left:119px;top:255px" width="16" height="14" viewBox="0 0 16 14"><rect x="0.5" y="0.5" width="15" height="13" fill="#d0e8fa" stroke="#1a3a9a"/><rect x="1" y="1" width="14" height="2" fill="#2d62c8"/><path d="M2 11 Q6 3 9 7 Q12 11 14 5" fill="none" stroke="#e03020" stroke-width="1.2"/><path d="M2 12 Q6 6 9 9 Q12 12 14 8" fill="none" stroke="#20a030" stroke-width="1.2"/></svg>
<div style="position:absolute;left:137.50px;top:256.19px;font-size:11px;line-height:14px;color:#101010;font-weight:400;white-space:pre;">Wykres</div>
<svg style="position:absolute;left:187px;top:253px" width="17" height="18" viewBox="0 0 17 18"><rect x="0.5" y="0.5" width="7" height="6" fill="#e8f0ff" stroke="#2050c0"/><rect x="1" y="3" width="6" height="3" fill="#60b040"/><line x1="0" y1="9" x2="7" y2="9" stroke="#333"/><rect x="8.5" y="7.5" width="7" height="6" fill="#e8f0ff" stroke="#2050c0"/><rect x="9" y="10" width="6" height="3" fill="#60b040"/><line x1="8" y1="16.5" x2="15" y2="16.5" stroke="#333"/></svg>
<div style="position:absolute;left:205.00px;top:256.19px;font-size:11px;line-height:14px;color:#101010;font-weight:400;white-space:pre;">Zdjęcia</div>
<div style="position:absolute;left:25px;top:272px;width:265px;height:323px;background:#fff;"></div>
<div style="position:absolute;left:32.00px;top:276.84px;font-size:12px;line-height:16px;color:#000;font-weight:700;white-space:pre;letter-spacing:-0.1px;">Sczegóły ważenia</div>
<div style="position:absolute;left:25px;top:296px;width:265px;height:1px;background:#a0a0a0;"></div>
<div style="position:absolute;left:25px;top:297px;width:265px;height:17px;background:linear-gradient(#fdfdfd,#ececec);border-bottom:1px solid #d8d8d8;"></div>
<div style="position:absolute;left:169px;top:298px;width:1px;height:15px;background:#dcdcdc;"></div>
<div style="position:absolute;left:31.00px;top:300.19px;font-size:11px;line-height:14px;color:#101010;font-weight:400;white-space:pre;letter-spacing:-0.2px;">Nazwa</div>
<div style="position:absolute;left:175.50px;top:300.19px;font-size:11px;line-height:14px;color:#101010;font-weight:400;white-space:pre;">Wartość</div>
<div style="position:absolute;left:27px;top:320px;width:9px;height:9px;background:linear-gradient(#fdfdfd,#e0e0e0);border:1px solid #8e8f8f;"></div>
<div style="position:absolute;left:29px;top:324px;width:5px;height:1px;background:#3a5a9a;"></div>
<div style="position:absolute;left:41.00px;top:315.84px;font-size:12px;line-height:16px;color:#000;font-weight:700;white-space:pre;letter-spacing:-0.1px;">Ogólne</div>
<div style="position:absolute;left:52.50px;top:335.19px;font-size:11px;line-height:14px;color:#101010;font-weight:400;white-space:pre;letter-spacing:-0.15px;">Nr ważenia:</div>
<div style="position:absolute;left:174.00px;top:334.52px;font-size:11.5px;line-height:15px;color:#000;font-weight:700;white-space:pre;letter-spacing:0.1px;">49/2015</div>
<div style="position:absolute;left:52.50px;top:353.19px;font-size:11px;line-height:14px;color:#101010;font-weight:400;white-space:pre;letter-spacing:-0.15px;">Data ważenia:</div>
<div style="position:absolute;left:174.00px;top:353.19px;font-size:11px;line-height:14px;color:#101010;font-weight:400;white-space:pre;letter-spacing:-0.15px;">2015-07-20 08:36</div>
<div style="position:absolute;left:52.50px;top:371.19px;font-size:11px;line-height:14px;color:#101010;font-weight:400;white-space:pre;letter-spacing:-0.15px;">Operator:</div>
<div style="position:absolute;left:174.00px;top:371.19px;font-size:11px;line-height:14px;color:#101010;font-weight:400;white-space:pre;letter-spacing:-0.15px;">Użytkownik domyślny</div>
<div style="position:absolute;left:52.50px;top:389.19px;font-size:11px;line-height:14px;color:#101010;font-weight:400;white-space:pre;letter-spacing:-0.15px;">Waga:</div>
<div style="position:absolute;left:174.00px;top:389.19px;font-size:11px;line-height:14px;color:#101010;font-weight:400;white-space:pre;letter-spacing:-0.15px;">Waga domyślna</div>
<div style="position:absolute;left:52.50px;top:407.19px;font-size:11px;line-height:14px;color:#101010;font-weight:400;white-space:pre;letter-spacing:-0.15px;">Typ ważenia:</div>
<div style="position:absolute;left:174.00px;top:407.19px;font-size:11px;line-height:14px;color:#101010;font-weight:400;white-space:pre;letter-spacing:-0.15px;">Ważenie kruszcu</div>
<div style="position:absolute;left:52.50px;top:425.19px;font-size:11px;line-height:14px;color:#101010;font-weight:400;white-space:pre;letter-spacing:-0.15px;">Brutto:</div>
<div style="position:absolute;left:174.00px;top:424.52px;font-size:11.5px;line-height:15px;color:#000;font-weight:700;white-space:pre;letter-spacing:0.1px;">439,0 kg</div>
<div style="position:absolute;left:52.50px;top:443.19px;font-size:11px;line-height:14px;color:#101010;font-weight:400;white-space:pre;letter-spacing:-0.15px;">Tara:</div>
<div style="position:absolute;left:174.00px;top:442.52px;font-size:11.5px;line-height:15px;color:#000;font-weight:700;white-space:pre;letter-spacing:0.1px;">0,0 kg</div>
<div style="position:absolute;left:52.50px;top:461.19px;font-size:11px;line-height:14px;color:#101010;font-weight:400;white-space:pre;letter-spacing:-0.15px;">Netto:</div>
<div style="position:absolute;left:174.00px;top:460.52px;font-size:11.5px;line-height:15px;color:#000;font-weight:700;white-space:pre;letter-spacing:0.1px;">439,0 kg</div>
<div style="position:absolute;left:27px;top:482px;width:9px;height:9px;background:linear-gradient(#fdfdfd,#e0e0e0);border:1px solid #8e8f8f;"></div>
<div style="position:absolute;left:29px;top:486px;width:5px;height:1px;background:#3a5a9a;"></div>
<div style="position:absolute;left:41.00px;top:477.84px;font-size:12px;line-height:16px;color:#000;font-weight:700;white-space:pre;letter-spacing:-0.1px;">Atrybuty</div>
<div style="position:absolute;left:52.50px;top:497.19px;font-size:11px;line-height:14px;color:#101010;font-weight:400;white-space:pre;letter-spacing:-0.15px;">Data:</div>
<div style="position:absolute;left:174.00px;top:497.19px;font-size:11px;line-height:14px;color:#101010;font-weight:400;white-space:pre;letter-spacing:-0.15px;">2015-07-20</div>
<div style="position:absolute;left:52.50px;top:515.19px;font-size:11px;line-height:14px;color:#101010;font-weight:400;white-space:pre;letter-spacing:-0.15px;">Kontrahent:</div>
<div style="position:absolute;left:174.00px;top:515.19px;font-size:11px;line-height:14px;color:#101010;font-weight:400;white-space:pre;letter-spacing:-0.15px;">"Wagi - Mix" sp. j. Ja...</div>
<div style="position:absolute;left:52.50px;top:533.19px;font-size:11px;line-height:14px;color:#101010;font-weight:400;white-space:pre;letter-spacing:-0.15px;">Objętość:</div>
<div style="position:absolute;left:174.00px;top:533.19px;font-size:11px;line-height:14px;color:#101010;font-weight:400;white-space:pre;letter-spacing:-0.15px;">51-100</div>
<div style="position:absolute;left:52.50px;top:551.19px;font-size:11px;line-height:14px;color:#101010;font-weight:400;white-space:pre;letter-spacing:-0.15px;">Uwagi:</div>
<div style="position:absolute;left:174.00px;top:551.19px;font-size:11px;line-height:14px;color:#101010;font-weight:400;white-space:pre;letter-spacing:-0.15px;"></div>
<div style="position:absolute;left:52.50px;top:569.19px;font-size:11px;line-height:14px;color:#101010;font-weight:400;white-space:pre;letter-spacing:-0.15px;">Wilgoć:</div>
<div style="position:absolute;left:174.00px;top:569.19px;font-size:11px;line-height:14px;color:#101010;font-weight:400;white-space:pre;letter-spacing:-0.15px;">&lt; 5</div>
<div style="position:absolute;left:290px;top:272px;width:8px;height:323px;background:#f0f0f0;"></div>
<div style="position:absolute;left:290px;top:385px;width:8px;height:97px;background:linear-gradient(90deg,#fafafa,#c8d6e0);border:1px solid #a8a8a8;border-radius:3px;"></div>
<svg style="position:absolute;left:291px;top:430px" width="6" height="8" viewBox="0 0 6 8"><path d="M5 0.5 L1.5 4 L5 7.5" fill="none" stroke="#000" stroke-width="1.4"/></svg>
<div style="position:absolute;left:597px;top:271px;width:256px;height:9px;background:linear-gradient(#fafcff,#c4d4e4);border:1px solid #a8a8a8;border-radius:3px;"></div>
<svg style="position:absolute;left:720px;top:272px" width="10" height="6" viewBox="0 0 10 6"><path d="M1 1 L5 5 L9 1" fill="none" stroke="#000" stroke-width="1.4"/></svg>
<div style="position:absolute;left:298px;top:280px;width:852px;height:316px;background:#fff;border:1px solid #1c3f94;"></div>
<div style="position:absolute;left:299px;top:281px;width:832px;height:18px;background:linear-gradient(#b4cdee,#aac6ec);border-bottom:1px solid #7fa2d8;"></div>
<div style="position:absolute;left:301.00px;top:284.19px;font-size:11px;line-height:14px;color:#101010;font-weight:400;white-space:pre;letter-spacing:-0.2px;">Nr ważenia</div>
<div style="position:absolute;left:392px;top:283px;width:1px;height:15px;background:#f4f8ff;border-left:1px solid #8aa8d8;width:2px;"></div>
<div style="position:absolute;left:395.00px;top:284.19px;font-size:11px;line-height:14px;color:#101010;font-weight:400;white-space:pre;letter-spacing:-0.2px;">Data</div>
<div style="position:absolute;left:552px;top:283px;width:1px;height:15px;background:#f4f8ff;border-left:1px solid #8aa8d8;width:2px;"></div>
<div style="position:absolute;left:555.00px;top:284.19px;font-size:11px;line-height:14px;color:#101010;font-weight:400;white-space:pre;letter-spacing:-0.2px;">Operator</div>
<div style="position:absolute;left:638px;top:283px;width:1px;height:15px;background:#f4f8ff;border-left:1px solid #8aa8d8;width:2px;"></div>
<div style="position:absolute;left:641.00px;top:284.19px;font-size:11px;line-height:14px;color:#101010;font-weight:400;white-space:pre;letter-spacing:-0.2px;">Waga</div>
<div style="position:absolute;left:724px;top:283px;width:1px;height:15px;background:#f4f8ff;border-left:1px solid #8aa8d8;width:2px;"></div>
<div style="position:absolute;left:727.00px;top:284.19px;font-size:11px;line-height:14px;color:#101010;font-weight:400;white-space:pre;letter-spacing:-0.2px;">Typ ważenia</div>
<div style="position:absolute;left:810px;top:283px;width:1px;height:15px;background:#f4f8ff;border-left:1px solid #8aa8d8;width:2px;"></div>
<div style="position:absolute;left:813.00px;top:284.19px;font-size:11px;line-height:14px;color:#101010;font-weight:400;white-space:pre;letter-spacing:-0.2px;">Brutto</div>
<div style="position:absolute;left:890px;top:283px;width:1px;height:15px;background:#f4f8ff;border-left:1px solid #8aa8d8;width:2px;"></div>
<div style="position:absolute;left:893.00px;top:284.19px;font-size:11px;line-height:14px;color:#101010;font-weight:400;white-space:pre;letter-spacing:-0.2px;">Tara</div>
<div style="position:absolute;left:970px;top:283px;width:1px;height:15px;background:#f4f8ff;border-left:1px solid #8aa8d8;width:2px;"></div>
<div style="position:absolute;left:973.00px;top:284.19px;font-size:11px;line-height:14px;color:#101010;font-weight:400;white-space:pre;letter-spacing:-0.2px;">Netto</div>
<div style="position:absolute;left:1051px;top:283px;width:1px;height:15px;background:#f4f8ff;border-left:1px solid #8aa8d8;width:2px;"></div>
<div style="position:absolute;left:1054.00px;top:284.19px;font-size:11px;line-height:14px;color:#101010;font-weight:400;white-space:pre;letter-spacing:-0.2px;">Jednostka</div>
<div style="position:absolute;left:299px;top:299px;width:832px;height:19px;background:#fff;"></div>
<div style="position:absolute;left:654.00px;top:302.19px;width:120px;text-align:center;font-size:11px;line-height:14px;color:#8a8a8a;font-weight:400;white-space:pre;">Filtrowanie</div>
<div style="position:absolute;left:299px;top:318px;width:832px;height:6px;background:linear-gradient(#a8c4ec,#8cb0e4);border-bottom:1px solid #5a86cc;"></div>
<div style="position:absolute;left:393px;top:324px;width:738px;height:17px;background:#f0f0f0;"></div>
<div style="position:absolute;left:299px;top:341px;width:832px;height:1px;background:#a0a0a0;"></div>
<div style="position:absolute;left:392px;top:324px;width:1px;height:18px;background:#a0a0a0;"></div>
<div style="position:absolute;left:552px;top:324px;width:1px;height:18px;background:#a0a0a0;"></div>
<div style="position:absolute;left:638px;top:324px;width:1px;height:18px;background:#a0a0a0;"></div>
<div style="position:absolute;left:724px;top:324px;width:1px;height:18px;background:#a0a0a0;"></div>
<div style="position:absolute;left:810px;top:324px;width:1px;height:18px;background:#a0a0a0;"></div>
<div style="position:absolute;left:890px;top:324px;width:1px;height:18px;background:#a0a0a0;"></div>
<div style="position:absolute;left:970px;top:324px;width:1px;height:18px;background:#a0a0a0;"></div>
<div style="position:absolute;left:1051px;top:324px;width:1px;height:18px;background:#a0a0a0;"></div>
<div style="position:absolute;left:301.00px;top:326.19px;font-size:11px;line-height:14px;color:#000;font-weight:400;white-space:pre;">49/2015</div>
<div style="position:absolute;left:395.00px;top:326.19px;font-size:11px;line-height:14px;color:#000;font-weight:400;white-space:pre;">2015-07-20 08:36:48</div>
<div style="position:absolute;left:554.50px;top:326.19px;width:82px;overflow:hidden;font-size:11px;line-height:14px;color:#000;font-weight:400;white-space:pre;letter-spacing:-0.25px;">Użytkownik domyślny</div>
<div style="position:absolute;left:645.50px;top:326.19px;width:79px;overflow:hidden;font-size:11px;line-height:14px;color:#000;font-weight:400;white-space:pre;letter-spacing:-0.25px;">Waga domyślna</div>
<div style="position:absolute;left:727.00px;top:326.19px;width:82px;overflow:hidden;font-size:11px;line-height:14px;color:#000;font-weight:400;white-space:pre;letter-spacing:-0.25px;">Ważenie kruszcu</div>
<div style="position:absolute;left:818.00px;top:326.19px;width:70px;text-align:right;font-size:11px;line-height:14px;color:#000;font-weight:400;white-space:pre;">439,0</div>
<div style="position:absolute;left:898.00px;top:326.19px;width:70px;text-align:right;font-size:11px;line-height:14px;color:#000;font-weight:400;white-space:pre;">0,0</div>
<div style="position:absolute;left:979.00px;top:326.19px;width:70px;text-align:right;font-size:11px;line-height:14px;color:#000;font-weight:400;white-space:pre;">439,0</div>
<div style="position:absolute;left:1059.00px;top:326.19px;width:70px;text-align:right;font-size:11px;line-height:14px;color:#000;font-weight:400;white-space:pre;">kg</div>
<div style="position:absolute;left:299px;top:359px;width:832px;height:1px;background:#a0a0a0;"></div>
<div style="position:absolute;left:392px;top:342px;width:1px;height:18px;background:#a0a0a0;"></div>
<div style="position:absolute;left:552px;top:342px;width:1px;height:18px;background:#a0a0a0;"></div>
<div style="position:absolute;left:638px;top:342px;width:1px;height:18px;background:#a0a0a0;"></div>
<div style="position:absolute;left:724px;top:342px;width:1px;height:18px;background:#a0a0a0;"></div>
<div style="position:absolute;left:810px;top:342px;width:1px;height:18px;background:#a0a0a0;"></div>
<div style="position:absolute;left:890px;top:342px;width:1px;height:18px;background:#a0a0a0;"></div>
<div style="position:absolute;left:970px;top:342px;width:1px;height:18px;background:#a0a0a0;"></div>
<div style="position:absolute;left:1051px;top:342px;width:1px;height:18px;background:#a0a0a0;"></div>
<div style="position:absolute;left:301.00px;top:344.19px;font-size:11px;line-height:14px;color:#000;font-weight:400;white-space:pre;">48/2015</div>
<div style="position:absolute;left:395.00px;top:344.19px;font-size:11px;line-height:14px;color:#000;font-weight:400;white-space:pre;">2015-07-20 08:35:12</div>
<div style="position:absolute;left:554.50px;top:344.19px;width:82px;overflow:hidden;font-size:11px;line-height:14px;color:#000;font-weight:400;white-space:pre;letter-spacing:-0.25px;">Użytkownik domyślny</div>
<div style="position:absolute;left:645.50px;top:344.19px;width:79px;overflow:hidden;font-size:11px;line-height:14px;color:#000;font-weight:400;white-space:pre;letter-spacing:-0.25px;">Waga domyślna</div>
<div style="position:absolute;left:727.00px;top:344.19px;width:82px;overflow:hidden;font-size:11px;line-height:14px;color:#000;font-weight:400;white-space:pre;letter-spacing:-0.25px;">Ważenie kruszcu</div>
<div style="position:absolute;left:818.00px;top:344.19px;width:70px;text-align:right;font-size:11px;line-height:14px;color:#000;font-weight:400;white-space:pre;">739,0</div>
<div style="position:absolute;left:898.00px;top:344.19px;width:70px;text-align:right;font-size:11px;line-height:14px;color:#000;font-weight:400;white-space:pre;">0,0</div>
<div style="position:absolute;left:979.00px;top:344.19px;width:70px;text-align:right;font-size:11px;line-height:14px;color:#000;font-weight:400;white-space:pre;">739,0</div>
<div style="position:absolute;left:1059.00px;top:344.19px;width:70px;text-align:right;font-size:11px;line-height:14px;color:#000;font-weight:400;white-space:pre;">kg</div>
<div style="position:absolute;left:299px;top:377px;width:832px;height:1px;background:#a0a0a0;"></div>
<div style="position:absolute;left:392px;top:360px;width:1px;height:18px;background:#a0a0a0;"></div>
<div style="position:absolute;left:552px;top:360px;width:1px;height:18px;background:#a0a0a0;"></div>
<div style="position:absolute;left:638px;top:360px;width:1px;height:18px;background:#a0a0a0;"></div>
<div style="position:absolute;left:724px;top:360px;width:1px;height:18px;background:#a0a0a0;"></div>
<div style="position:absolute;left:810px;top:360px;width:1px;height:18px;background:#a0a0a0;"></div>
<div style="position:absolute;left:890px;top:360px;width:1px;height:18px;background:#a0a0a0;"></div>
<div style="position:absolute;left:970px;top:360px;width:1px;height:18px;background:#a0a0a0;"></div>
<div style="position:absolute;left:1051px;top:360px;width:1px;height:18px;background:#a0a0a0;"></div>
<div style="position:absolute;left:301.00px;top:362.19px;font-size:11px;line-height:14px;color:#000;font-weight:400;white-space:pre;">47/2015</div>
<div style="position:absolute;left:395.00px;top:362.19px;font-size:11px;line-height:14px;color:#000;font-weight:400;white-space:pre;">2015-07-20 08:34:55</div>
<div style="position:absolute;left:554.50px;top:362.19px;width:82px;overflow:hidden;font-size:11px;line-height:14px;color:#000;font-weight:400;white-space:pre;letter-spacing:-0.25px;">Użytkownik domyślny</div>
<div style="position:absolute;left:645.50px;top:362.19px;width:79px;overflow:hidden;font-size:11px;line-height:14px;color:#000;font-weight:400;white-space:pre;letter-spacing:-0.25px;">Waga domyślna</div>
<div style="position:absolute;left:727.00px;top:362.19px;width:82px;overflow:hidden;font-size:11px;line-height:14px;color:#000;font-weight:400;white-space:pre;letter-spacing:-0.25px;">Ważenie kruszcu</div>
<div style="position:absolute;left:818.00px;top:362.19px;width:70px;text-align:right;font-size:11px;line-height:14px;color:#000;font-weight:400;white-space:pre;">1039,0</div>
<div style="position:absolute;left:898.00px;top:362.19px;width:70px;text-align:right;font-size:11px;line-height:14px;color:#000;font-weight:400;white-space:pre;">0,0</div>
<div style="position:absolute;left:979.00px;top:362.19px;width:70px;text-align:right;font-size:11px;line-height:14px;color:#000;font-weight:400;white-space:pre;">1039,0</div>
<div style="position:absolute;left:1059.00px;top:362.19px;width:70px;text-align:right;font-size:11px;line-height:14px;color:#000;font-weight:400;white-space:pre;">kg</div>
<div style="position:absolute;left:299px;top:395px;width:832px;height:1px;background:#a0a0a0;"></div>
<div style="position:absolute;left:392px;top:378px;width:1px;height:18px;background:#a0a0a0;"></div>
<div style="position:absolute;left:552px;top:378px;width:1px;height:18px;background:#a0a0a0;"></div>
<div style="position:absolute;left:638px;top:378px;width:1px;height:18px;background:#a0a0a0;"></div>
<div style="position:absolute;left:724px;top:378px;width:1px;height:18px;background:#a0a0a0;"></div>
<div style="position:absolute;left:810px;top:378px;width:1px;height:18px;background:#a0a0a0;"></div>
<div style="position:absolute;left:890px;top:378px;width:1px;height:18px;background:#a0a0a0;"></div>
<div style="position:absolute;left:970px;top:378px;width:1px;height:18px;background:#a0a0a0;"></div>
<div style="position:absolute;left:1051px;top:378px;width:1px;height:18px;background:#a0a0a0;"></div>
<div style="position:absolute;left:301.00px;top:380.19px;font-size:11px;line-height:14px;color:#000;font-weight:400;white-space:pre;">46/2015</div>
<div style="position:absolute;left:395.00px;top:380.19px;font-size:11px;line-height:14px;color:#000;font-weight:400;white-space:pre;">2015-07-20 08:34:35</div>
<div style="position:absolute;left:554.50px;top:380.19px;width:82px;overflow:hidden;font-size:11px;line-height:14px;color:#000;font-weight:400;white-space:pre;letter-spacing:-0.25px;">Użytkownik domyślny</div>
<div style="position:absolute;left:645.50px;top:380.19px;width:79px;overflow:hidden;font-size:11px;line-height:14px;color:#000;font-weight:400;white-space:pre;letter-spacing:-0.25px;">Waga domyślna</div>
<div style="position:absolute;left:727.00px;top:380.19px;width:82px;overflow:hidden;font-size:11px;line-height:14px;color:#000;font-weight:400;white-space:pre;letter-spacing:-0.25px;">Ważenie kruszcu</div>
<div style="position:absolute;left:818.00px;top:380.19px;width:70px;text-align:right;font-size:11px;line-height:14px;color:#000;font-weight:400;white-space:pre;">1341,0</div>
<div style="position:absolute;left:898.00px;top:380.19px;width:70px;text-align:right;font-size:11px;line-height:14px;color:#000;font-weight:400;white-space:pre;">0,0</div>
<div style="position:absolute;left:979.00px;top:380.19px;width:70px;text-align:right;font-size:11px;line-height:14px;color:#000;font-weight:400;white-space:pre;">1341,0</div>
<div style="position:absolute;left:1059.00px;top:380.19px;width:70px;text-align:right;font-size:11px;line-height:14px;color:#000;font-weight:400;white-space:pre;">kg</div>
<div style="position:absolute;left:299px;top:413px;width:832px;height:1px;background:#a0a0a0;"></div>
<div style="position:absolute;left:392px;top:396px;width:1px;height:18px;background:#a0a0a0;"></div>
<div style="position:absolute;left:552px;top:396px;width:1px;height:18px;background:#a0a0a0;"></div>
<div style="position:absolute;left:638px;top:396px;width:1px;height:18px;background:#a0a0a0;"></div>
<div style="position:absolute;left:724px;top:396px;width:1px;height:18px;background:#a0a0a0;"></div>
<div style="position:absolute;left:810px;top:396px;width:1px;height:18px;background:#a0a0a0;"></div>
<div style="position:absolute;left:890px;top:396px;width:1px;height:18px;background:#a0a0a0;"></div>
<div style="position:absolute;left:970px;top:396px;width:1px;height:18px;background:#a0a0a0;"></div>
<div style="position:absolute;left:1051px;top:396px;width:1px;height:18px;background:#a0a0a0;"></div>
<div style="position:absolute;left:301.00px;top:398.19px;font-size:11px;line-height:14px;color:#000;font-weight:400;white-space:pre;">45/2015</div>
<div style="position:absolute;left:395.00px;top:398.19px;font-size:11px;line-height:14px;color:#000;font-weight:400;white-space:pre;">2015-07-20 08:34:14</div>
<div style="position:absolute;left:554.50px;top:398.19px;width:82px;overflow:hidden;font-size:11px;line-height:14px;color:#000;font-weight:400;white-space:pre;letter-spacing:-0.25px;">Użytkownik domyślny</div>
<div style="position:absolute;left:645.50px;top:398.19px;width:79px;overflow:hidden;font-size:11px;line-height:14px;color:#000;font-weight:400;white-space:pre;letter-spacing:-0.25px;">Waga domyślna</div>
<div style="position:absolute;left:727.00px;top:398.19px;width:82px;overflow:hidden;font-size:11px;line-height:14px;color:#000;font-weight:400;white-space:pre;letter-spacing:-0.25px;">Ważenie kruszcu</div>
<div style="position:absolute;left:818.00px;top:398.19px;width:70px;text-align:right;font-size:11px;line-height:14px;color:#000;font-weight:400;white-space:pre;">1341,0</div>
<div style="position:absolute;left:898.00px;top:398.19px;width:70px;text-align:right;font-size:11px;line-height:14px;color:#000;font-weight:400;white-space:pre;">0,0</div>
<div style="position:absolute;left:979.00px;top:398.19px;width:70px;text-align:right;font-size:11px;line-height:14px;color:#000;font-weight:400;white-space:pre;">1341,0</div>
<div style="position:absolute;left:1059.00px;top:398.19px;width:70px;text-align:right;font-size:11px;line-height:14px;color:#000;font-weight:400;white-space:pre;">kg</div>
<div style="position:absolute;left:299px;top:431px;width:832px;height:1px;background:#a0a0a0;"></div>
<div style="position:absolute;left:392px;top:414px;width:1px;height:18px;background:#a0a0a0;"></div>
<div style="position:absolute;left:552px;top:414px;width:1px;height:18px;background:#a0a0a0;"></div>
<div style="position:absolute;left:638px;top:414px;width:1px;height:18px;background:#a0a0a0;"></div>
<div style="position:absolute;left:724px;top:414px;width:1px;height:18px;background:#a0a0a0;"></div>
<div style="position:absolute;left:810px;top:414px;width:1px;height:18px;background:#a0a0a0;"></div>
<div style="position:absolute;left:890px;top:414px;width:1px;height:18px;background:#a0a0a0;"></div>
<div style="position:absolute;left:970px;top:414px;width:1px;height:18px;background:#a0a0a0;"></div>
<div style="position:absolute;left:1051px;top:414px;width:1px;height:18px;background:#a0a0a0;"></div>
<div style="position:absolute;left:301.00px;top:416.19px;font-size:11px;line-height:14px;color:#000;font-weight:400;white-space:pre;">44/2015</div>
<div style="position:absolute;left:395.00px;top:416.19px;font-size:11px;line-height:14px;color:#000;font-weight:400;white-space:pre;">2015-07-20 08:33:56</div>
<div style="position:absolute;left:554.50px;top:416.19px;width:82px;overflow:hidden;font-size:11px;line-height:14px;color:#000;font-weight:400;white-space:pre;letter-spacing:-0.25px;">Użytkownik domyślny</div>
<div style="position:absolute;left:645.50px;top:416.19px;width:79px;overflow:hidden;font-size:11px;line-height:14px;color:#000;font-weight:400;white-space:pre;letter-spacing:-0.25px;">Waga domyślna</div>
<div style="position:absolute;left:727.00px;top:416.19px;width:82px;overflow:hidden;font-size:11px;line-height:14px;color:#000;font-weight:400;white-space:pre;letter-spacing:-0.25px;">Ważenie kruszcu</div>
<div style="position:absolute;left:818.00px;top:416.19px;width:70px;text-align:right;font-size:11px;line-height:14px;color:#000;font-weight:400;white-space:pre;">943,0</div>
<div style="position:absolute;left:898.00px;top:416.19px;width:70px;text-align:right;font-size:11px;line-height:14px;color:#000;font-weight:400;white-space:pre;">0,0</div>
<div style="position:absolute;left:979.00px;top:416.19px;width:70px;text-align:right;font-size:11px;line-height:14px;color:#000;font-weight:400;white-space:pre;">943,0</div>
<div style="position:absolute;left:1059.00px;top:416.19px;width:70px;text-align:right;font-size:11px;line-height:14px;color:#000;font-weight:400;white-space:pre;">kg</div>
<div style="position:absolute;left:299px;top:449px;width:832px;height:1px;background:#a0a0a0;"></div>
<div style="position:absolute;left:392px;top:432px;width:1px;height:18px;background:#a0a0a0;"></div>
<div style="position:absolute;left:552px;top:432px;width:1px;height:18px;background:#a0a0a0;"></div>
<div style="position:absolute;left:638px;top:432px;width:1px;height:18px;background:#a0a0a0;"></div>
<div style="position:absolute;left:724px;top:432px;width:1px;height:18px;background:#a0a0a0;"></div>
<div style="position:absolute;left:810px;top:432px;width:1px;height:18px;background:#a0a0a0;"></div>
<div style="position:absolute;left:890px;top:432px;width:1px;height:18px;background:#a0a0a0;"></div>
<div style="position:absolute;left:970px;top:432px;width:1px;height:18px;background:#a0a0a0;"></div>
<div style="position:absolute;left:1051px;top:432px;width:1px;height:18px;background:#a0a0a0;"></div>
<div style="position:absolute;left:301.00px;top:434.19px;font-size:11px;line-height:14px;color:#000;font-weight:400;white-space:pre;">43/2015</div>
<div style="position:absolute;left:395.00px;top:434.19px;font-size:11px;line-height:14px;color:#000;font-weight:400;white-space:pre;">2015-07-20 08:33:26</div>
<div style="position:absolute;left:554.50px;top:434.19px;width:82px;overflow:hidden;font-size:11px;line-height:14px;color:#000;font-weight:400;white-space:pre;letter-spacing:-0.25px;">Użytkownik domyślny</div>
<div style="position:absolute;left:645.50px;top:434.19px;width:79px;overflow:hidden;font-size:11px;line-height:14px;color:#000;font-weight:400;white-space:pre;letter-spacing:-0.25px;">Waga domyślna</div>
<div style="position:absolute;left:727.00px;top:434.19px;width:82px;overflow:hidden;font-size:11px;line-height:14px;color:#000;font-weight:400;white-space:pre;letter-spacing:-0.25px;">Ważenie kruszcu</div>
<div style="position:absolute;left:818.00px;top:434.19px;width:70px;text-align:right;font-size:11px;line-height:14px;color:#000;font-weight:400;white-space:pre;">758,0</div>
<div style="position:absolute;left:898.00px;top:434.19px;width:70px;text-align:right;font-size:11px;line-height:14px;color:#000;font-weight:400;white-space:pre;">0,0</div>
<div style="position:absolute;left:979.00px;top:434.19px;width:70px;text-align:right;font-size:11px;line-height:14px;color:#000;font-weight:400;white-space:pre;">758,0</div>
<div style="position:absolute;left:1059.00px;top:434.19px;width:70px;text-align:right;font-size:11px;line-height:14px;color:#000;font-weight:400;white-space:pre;">kg</div>
<div style="position:absolute;left:299px;top:467px;width:832px;height:1px;background:#a0a0a0;"></div>
<div style="position:absolute;left:392px;top:450px;width:1px;height:18px;background:#a0a0a0;"></div>
<div style="position:absolute;left:552px;top:450px;width:1px;height:18px;background:#a0a0a0;"></div>
<div style="position:absolute;left:638px;top:450px;width:1px;height:18px;background:#a0a0a0;"></div>
<div style="position:absolute;left:724px;top:450px;width:1px;height:18px;background:#a0a0a0;"></div>
<div style="position:absolute;left:810px;top:450px;width:1px;height:18px;background:#a0a0a0;"></div>
<div style="position:absolute;left:890px;top:450px;width:1px;height:18px;background:#a0a0a0;"></div>
<div style="position:absolute;left:970px;top:450px;width:1px;height:18px;background:#a0a0a0;"></div>
<div style="position:absolute;left:1051px;top:450px;width:1px;height:18px;background:#a0a0a0;"></div>
<div style="position:absolute;left:301.00px;top:452.19px;font-size:11px;line-height:14px;color:#000;font-weight:400;white-space:pre;">42/2015</div>
<div style="position:absolute;left:395.00px;top:452.19px;font-size:11px;line-height:14px;color:#000;font-weight:400;white-space:pre;">2015-07-20 08:33:07</div>
<div style="position:absolute;left:554.50px;top:452.19px;width:82px;overflow:hidden;font-size:11px;line-height:14px;color:#000;font-weight:400;white-space:pre;letter-spacing:-0.25px;">Użytkownik domyślny</div>
<div style="position:absolute;left:645.50px;top:452.19px;width:79px;overflow:hidden;font-size:11px;line-height:14px;color:#000;font-weight:400;white-space:pre;letter-spacing:-0.25px;">Waga domyślna</div>
<div style="position:absolute;left:727.00px;top:452.19px;width:82px;overflow:hidden;font-size:11px;line-height:14px;color:#000;font-weight:400;white-space:pre;letter-spacing:-0.25px;">Ważenie kruszcu</div>
<div style="position:absolute;left:818.00px;top:452.19px;width:70px;text-align:right;font-size:11px;line-height:14px;color:#000;font-weight:400;white-space:pre;">1158,0</div>
<div style="position:absolute;left:898.00px;top:452.19px;width:70px;text-align:right;font-size:11px;line-height:14px;color:#000;font-weight:400;white-space:pre;">0,0</div>
<div style="position:absolute;left:979.00px;top:452.19px;width:70px;text-align:right;font-size:11px;line-height:14px;color:#000;font-weight:400;white-space:pre;">1158,0</div>
<div style="position:absolute;left:1059.00px;top:452.19px;width:70px;text-align:right;font-size:11px;line-height:14px;color:#000;font-weight:400;white-space:pre;">kg</div>
<div style="position:absolute;left:299px;top:485px;width:832px;height:1px;background:#a0a0a0;"></div>
<div style="position:absolute;left:392px;top:468px;width:1px;height:18px;background:#a0a0a0;"></div>
<div style="position:absolute;left:552px;top:468px;width:1px;height:18px;background:#a0a0a0;"></div>
<div style="position:absolute;left:638px;top:468px;width:1px;height:18px;background:#a0a0a0;"></div>
<div style="position:absolute;left:724px;top:468px;width:1px;height:18px;background:#a0a0a0;"></div>
<div style="position:absolute;left:810px;top:468px;width:1px;height:18px;background:#a0a0a0;"></div>
<div style="position:absolute;left:890px;top:468px;width:1px;height:18px;background:#a0a0a0;"></div>
<div style="position:absolute;left:970px;top:468px;width:1px;height:18px;background:#a0a0a0;"></div>
<div style="position:absolute;left:1051px;top:468px;width:1px;height:18px;background:#a0a0a0;"></div>
<div style="position:absolute;left:301.00px;top:470.19px;font-size:11px;line-height:14px;color:#000;font-weight:400;white-space:pre;">41/2015</div>
<div style="position:absolute;left:395.00px;top:470.19px;font-size:11px;line-height:14px;color:#000;font-weight:400;white-space:pre;">2015-07-20 08:32:40</div>
<div style="position:absolute;left:554.50px;top:470.19px;width:82px;overflow:hidden;font-size:11px;line-height:14px;color:#000;font-weight:400;white-space:pre;letter-spacing:-0.25px;">Użytkownik domyślny</div>
<div style="position:absolute;left:645.50px;top:470.19px;width:79px;overflow:hidden;font-size:11px;line-height:14px;color:#000;font-weight:400;white-space:pre;letter-spacing:-0.25px;">Waga domyślna</div>
<div style="position:absolute;left:727.00px;top:470.19px;width:82px;overflow:hidden;font-size:11px;line-height:14px;color:#000;font-weight:400;white-space:pre;letter-spacing:-0.25px;">Ważenie kruszcu</div>
<div style="position:absolute;left:818.00px;top:470.19px;width:70px;text-align:right;font-size:11px;line-height:14px;color:#000;font-weight:400;white-space:pre;">658,0</div>
<div style="position:absolute;left:898.00px;top:470.19px;width:70px;text-align:right;font-size:11px;line-height:14px;color:#000;font-weight:400;white-space:pre;">0,0</div>
<div style="position:absolute;left:979.00px;top:470.19px;width:70px;text-align:right;font-size:11px;line-height:14px;color:#000;font-weight:400;white-space:pre;">658,0</div>
<div style="position:absolute;left:1059.00px;top:470.19px;width:70px;text-align:right;font-size:11px;line-height:14px;color:#000;font-weight:400;white-space:pre;">kg</div>
<div style="position:absolute;left:299px;top:503px;width:832px;height:1px;background:#a0a0a0;"></div>
<div style="position:absolute;left:392px;top:486px;width:1px;height:18px;background:#a0a0a0;"></div>
<div style="position:absolute;left:552px;top:486px;width:1px;height:18px;background:#a0a0a0;"></div>
<div style="position:absolute;left:638px;top:486px;width:1px;height:18px;background:#a0a0a0;"></div>
<div style="position:absolute;left:724px;top:486px;width:1px;height:18px;background:#a0a0a0;"></div>
<div style="position:absolute;left:810px;top:486px;width:1px;height:18px;background:#a0a0a0;"></div>
<div style="position:absolute;left:890px;top:486px;width:1px;height:18px;background:#a0a0a0;"></div>
<div style="position:absolute;left:970px;top:486px;width:1px;height:18px;background:#a0a0a0;"></div>
<div style="position:absolute;left:1051px;top:486px;width:1px;height:18px;background:#a0a0a0;"></div>
<div style="position:absolute;left:301.00px;top:488.19px;font-size:11px;line-height:14px;color:#000;font-weight:400;white-space:pre;">40/2015</div>
<div style="position:absolute;left:395.00px;top:488.19px;font-size:11px;line-height:14px;color:#000;font-weight:400;white-space:pre;">2015-07-20 08:32:22</div>
<div style="position:absolute;left:554.50px;top:488.19px;width:82px;overflow:hidden;font-size:11px;line-height:14px;color:#000;font-weight:400;white-space:pre;letter-spacing:-0.25px;">Użytkownik domyślny</div>
<div style="position:absolute;left:645.50px;top:488.19px;width:79px;overflow:hidden;font-size:11px;line-height:14px;color:#000;font-weight:400;white-space:pre;letter-spacing:-0.25px;">Waga domyślna</div>
<div style="position:absolute;left:727.00px;top:488.19px;width:82px;overflow:hidden;font-size:11px;line-height:14px;color:#000;font-weight:400;white-space:pre;letter-spacing:-0.25px;">Ważenie kruszcu</div>
<div style="position:absolute;left:818.00px;top:488.19px;width:70px;text-align:right;font-size:11px;line-height:14px;color:#000;font-weight:400;white-space:pre;">347,0</div>
<div style="position:absolute;left:898.00px;top:488.19px;width:70px;text-align:right;font-size:11px;line-height:14px;color:#000;font-weight:400;white-space:pre;">0,0</div>
<div style="position:absolute;left:979.00px;top:488.19px;width:70px;text-align:right;font-size:11px;line-height:14px;color:#000;font-weight:400;white-space:pre;">347,0</div>
<div style="position:absolute;left:1059.00px;top:488.19px;width:70px;text-align:right;font-size:11px;line-height:14px;color:#000;font-weight:400;white-space:pre;">kg</div>
<div style="position:absolute;left:299px;top:521px;width:832px;height:1px;background:#a0a0a0;"></div>
<div style="position:absolute;left:392px;top:504px;width:1px;height:18px;background:#a0a0a0;"></div>
<div style="position:absolute;left:552px;top:504px;width:1px;height:18px;background:#a0a0a0;"></div>
<div style="position:absolute;left:638px;top:504px;width:1px;height:18px;background:#a0a0a0;"></div>
<div style="position:absolute;left:724px;top:504px;width:1px;height:18px;background:#a0a0a0;"></div>
<div style="position:absolute;left:810px;top:504px;width:1px;height:18px;background:#a0a0a0;"></div>
<div style="position:absolute;left:890px;top:504px;width:1px;height:18px;background:#a0a0a0;"></div>
<div style="position:absolute;left:970px;top:504px;width:1px;height:18px;background:#a0a0a0;"></div>
<div style="position:absolute;left:1051px;top:504px;width:1px;height:18px;background:#a0a0a0;"></div>
<div style="position:absolute;left:301.00px;top:506.19px;font-size:11px;line-height:14px;color:#000;font-weight:400;white-space:pre;">39/2015</div>
<div style="position:absolute;left:395.00px;top:506.19px;font-size:11px;line-height:14px;color:#000;font-weight:400;white-space:pre;">2015-07-20 08:32:05</div>
<div style="position:absolute;left:554.50px;top:506.19px;width:82px;overflow:hidden;font-size:11px;line-height:14px;color:#000;font-weight:400;white-space:pre;letter-spacing:-0.25px;">Użytkownik domyślny</div>
<div style="position:absolute;left:645.50px;top:506.19px;width:79px;overflow:hidden;font-size:11px;line-height:14px;color:#000;font-weight:400;white-space:pre;letter-spacing:-0.25px;">Waga domyślna</div>
<div style="position:absolute;left:727.00px;top:506.19px;width:82px;overflow:hidden;font-size:11px;line-height:14px;color:#000;font-weight:400;white-space:pre;letter-spacing:-0.25px;">Ważenie kruszcu</div>
<div style="position:absolute;left:299px;top:539px;width:832px;height:1px;background:#a0a0a0;"></div>
<div style="position:absolute;left:392px;top:522px;width:1px;height:18px;background:#a0a0a0;"></div>
<div style="position:absolute;left:552px;top:522px;width:1px;height:18px;background:#a0a0a0;"></div>
<div style="position:absolute;left:638px;top:522px;width:1px;height:18px;background:#a0a0a0;"></div>
<div style="position:absolute;left:724px;top:522px;width:1px;height:18px;background:#a0a0a0;"></div>
<div style="position:absolute;left:810px;top:522px;width:1px;height:18px;background:#a0a0a0;"></div>
<div style="position:absolute;left:890px;top:522px;width:1px;height:18px;background:#a0a0a0;"></div>
<div style="position:absolute;left:970px;top:522px;width:1px;height:18px;background:#a0a0a0;"></div>
<div style="position:absolute;left:1051px;top:522px;width:1px;height:18px;background:#a0a0a0;"></div>
<div style="position:absolute;left:301.00px;top:524.19px;font-size:11px;line-height:14px;color:#000;font-weight:400;white-space:pre;">38/2015</div>
<div style="position:absolute;left:395.00px;top:524.19px;font-size:11px;line-height:14px;color:#000;font-weight:400;white-space:pre;">2015-07-20 08:31:49</div>
<div style="position:absolute;left:554.50px;top:524.19px;width:82px;overflow:hidden;font-size:11px;line-height:14px;color:#000;font-weight:400;white-space:pre;letter-spacing:-0.25px;">Użytkownik domyślny</div>
<div style="position:absolute;left:645.50px;top:524.19px;width:79px;overflow:hidden;font-size:11px;line-height:14px;color:#000;font-weight:400;white-space:pre;letter-spacing:-0.25px;">Waga domyślna</div>
<div style="position:absolute;left:727.00px;top:524.19px;width:82px;overflow:hidden;font-size:11px;line-height:14px;color:#000;font-weight:400;white-space:pre;letter-spacing:-0.25px;">Ważenie kruszcu</div>
<div style="position:absolute;left:299px;top:557px;width:832px;height:1px;background:#a0a0a0;"></div>
<div style="position:absolute;left:392px;top:540px;width:1px;height:18px;background:#a0a0a0;"></div>
<div style="position:absolute;left:552px;top:540px;width:1px;height:18px;background:#a0a0a0;"></div>
<div style="position:absolute;left:638px;top:540px;width:1px;height:18px;background:#a0a0a0;"></div>
<div style="position:absolute;left:724px;top:540px;width:1px;height:18px;background:#a0a0a0;"></div>
<div style="position:absolute;left:810px;top:540px;width:1px;height:18px;background:#a0a0a0;"></div>
<div style="position:absolute;left:890px;top:540px;width:1px;height:18px;background:#a0a0a0;"></div>
<div style="position:absolute;left:970px;top:540px;width:1px;height:18px;background:#a0a0a0;"></div>
<div style="position:absolute;left:1051px;top:540px;width:1px;height:18px;background:#a0a0a0;"></div>
<div style="position:absolute;left:301.00px;top:542.19px;font-size:11px;line-height:14px;color:#000;font-weight:400;white-space:pre;">37/2015</div>
<div style="position:absolute;left:395.00px;top:542.19px;font-size:11px;line-height:14px;color:#000;font-weight:400;white-space:pre;">2015-07-20 08:31:31</div>
<div style="position:absolute;left:554.50px;top:542.19px;width:82px;overflow:hidden;font-size:11px;line-height:14px;color:#000;font-weight:400;white-space:pre;letter-spacing:-0.25px;">Użytkownik domyślny</div>
<div style="position:absolute;left:645.50px;top:542.19px;width:79px;overflow:hidden;font-size:11px;line-height:14px;color:#000;font-weight:400;white-space:pre;letter-spacing:-0.25px;">Waga domyślna</div>
<div style="position:absolute;left:727.00px;top:542.19px;width:82px;overflow:hidden;font-size:11px;line-height:14px;color:#000;font-weight:400;white-space:pre;letter-spacing:-0.25px;">Ważenie kruszcu</div>
<div style="position:absolute;left:299px;top:575px;width:832px;height:1px;background:#a0a0a0;"></div>
<div style="position:absolute;left:392px;top:558px;width:1px;height:18px;background:#a0a0a0;"></div>
<div style="position:absolute;left:552px;top:558px;width:1px;height:18px;background:#a0a0a0;"></div>
<div style="position:absolute;left:638px;top:558px;width:1px;height:18px;background:#a0a0a0;"></div>
<div style="position:absolute;left:724px;top:558px;width:1px;height:18px;background:#a0a0a0;"></div>
<div style="position:absolute;left:810px;top:558px;width:1px;height:18px;background:#a0a0a0;"></div>
<div style="position:absolute;left:890px;top:558px;width:1px;height:18px;background:#a0a0a0;"></div>
<div style="position:absolute;left:970px;top:558px;width:1px;height:18px;background:#a0a0a0;"></div>
<div style="position:absolute;left:1051px;top:558px;width:1px;height:18px;background:#a0a0a0;"></div>
<div style="position:absolute;left:301.00px;top:560.19px;font-size:11px;line-height:14px;color:#000;font-weight:400;white-space:pre;">36/2015</div>
<div style="position:absolute;left:395.00px;top:560.19px;font-size:11px;line-height:14px;color:#000;font-weight:400;white-space:pre;">2015-07-20 08:30:03</div>
<div style="position:absolute;left:554.50px;top:560.19px;width:82px;overflow:hidden;font-size:11px;line-height:14px;color:#000;font-weight:400;white-space:pre;letter-spacing:-0.25px;">Użytkownik domyślny</div>
<div style="position:absolute;left:645.50px;top:560.19px;width:79px;overflow:hidden;font-size:11px;line-height:14px;color:#000;font-weight:400;white-space:pre;letter-spacing:-0.25px;">Waga domyślna</div>
<div style="position:absolute;left:727.00px;top:560.19px;width:82px;overflow:hidden;font-size:11px;line-height:14px;color:#000;font-weight:400;white-space:pre;letter-spacing:-0.25px;">Ważenie kruszcu</div>
<div style="position:absolute;left:299px;top:593px;width:832px;height:1px;background:#a0a0a0;"></div>
<div style="position:absolute;left:392px;top:576px;width:1px;height:18px;background:#a0a0a0;"></div>
<div style="position:absolute;left:552px;top:576px;width:1px;height:18px;background:#a0a0a0;"></div>
<div style="position:absolute;left:638px;top:576px;width:1px;height:18px;background:#a0a0a0;"></div>
<div style="position:absolute;left:724px;top:576px;width:1px;height:18px;background:#a0a0a0;"></div>
<div style="position:absolute;left:810px;top:576px;width:1px;height:18px;background:#a0a0a0;"></div>
<div style="position:absolute;left:890px;top:576px;width:1px;height:18px;background:#a0a0a0;"></div>
<div style="position:absolute;left:970px;top:576px;width:1px;height:18px;background:#a0a0a0;"></div>
<div style="position:absolute;left:1051px;top:576px;width:1px;height:18px;background:#a0a0a0;"></div>
<div style="position:absolute;left:301.00px;top:578.19px;font-size:11px;line-height:14px;color:#000;font-weight:400;white-space:pre;">35/2015</div>
<div style="position:absolute;left:395.00px;top:578.19px;font-size:11px;line-height:14px;color:#000;font-weight:400;white-space:pre;">2015-04-08 12:38:31</div>
<div style="position:absolute;left:554.50px;top:578.19px;width:82px;overflow:hidden;font-size:11px;line-height:14px;color:#000;font-weight:400;white-space:pre;letter-spacing:-0.25px;">Użytkownik domyślny</div>
<div style="position:absolute;left:645.50px;top:578.19px;width:79px;overflow:hidden;font-size:11px;line-height:14px;color:#000;font-weight:400;white-space:pre;letter-spacing:-0.25px;">Waga domyślna</div>
<div style="position:absolute;left:727.00px;top:578.19px;width:82px;overflow:hidden;font-size:11px;line-height:14px;color:#000;font-weight:400;white-space:pre;letter-spacing:-0.25px;">Ważenie kruszcu</div>
<div style="position:absolute;left:1131px;top:281px;width:18px;height:314px;background:#f0f0f0;border-left:1px solid #e4e4e4;"></div>
<svg style="position:absolute;left:1136px;top:286px" width="9" height="6" viewBox="0 0 9 6"><path d="M1 5 L4.5 1 L8 5 Z" fill="#444"/></svg>
<div style="position:absolute;left:1133px;top:300px;width:14px;height:81px;background:linear-gradient(90deg,#f4f4f4,#dcdcdc);border:1px solid #9a9a9a;border-radius:2px;"></div>
<svg style="position:absolute;left:1136px;top:336px" width="8" height="8" viewBox="0 0 8 8"><line x1="0" y1="1" x2="8" y2="1" stroke="#555"/><line x1="0" y1="3.5" x2="8" y2="3.5" stroke="#555"/><line x1="0" y1="6" x2="8" y2="6" stroke="#555"/></svg>
<div style="position:absolute;left:715px;top:504px;width:945px;height:479px;background:linear-gradient(#9db6d2 0px,#a8c0db 18px,#b9d1ea 28px,#bcd3ea 100%);border:1px solid #222;border-right-color:#000;border-radius:5px 5px 0 0;box-shadow:inset 0 1px 0 0 rgba(255,255,255,0.85),inset 0 0 0 1px rgba(255,255,255,0.45), inset -1px -1px 0 1px #30d0f0;"></div>
<div style="position:absolute;left:725px;top:514px;width:16px;height:16px;background:#fff;border:1px solid #4a9a5a;"></div>
<div style="position:absolute;left:718.00px;top:516.55px;width:30px;text-align:center;font-size:8.5px;line-height:11px;color:#1a7e2e;font-weight:700;white-space:pre;letter-spacing:-0.4px;transform:scaleX(0.55);">X-SCL</div>
<div style="position:absolute;left:745.00px;top:515.52px;font-size:11.5px;line-height:15px;color:#000;font-weight:400;white-space:pre;letter-spacing:-0.1px;text-shadow:0 0 6px #fff,0 0 3px #fff;">Seria pomiarów</div>
<div style="position:absolute;left:1553px;top:514px;width:31px;height:17px;background:linear-gradient(#c4d6ea,#a9c1dc 50%,#95b0cf 51%,#b8cce2);border:1px solid #5a6a80;border-radius:3px;"></div>
<div style="position:absolute;left:1586px;top:514px;width:31px;height:17px;background:linear-gradient(#c4d6ea,#a9c1dc 50%,#95b0cf 51%,#b8cce2);border:1px solid #5a6a80;border-radius:3px;"></div>
<div style="position:absolute;left:1619px;top:514px;width:31px;height:17px;background:linear-gradient(#e8a498,#d86c58 50%,#c0412c 51%,#d8644a);border:1px solid #5a1a14;border-radius:3px;"></div>
<svg style="position:absolute;left:1563px;top:521px" width="13" height="7" viewBox="0 0 13 7"><rect x="0.75" y="0.75" width="10.5" height="4.5" rx="1" fill="#f4f4f4" stroke="#3a3f4a" stroke-width="1.5"/></svg>
<svg style="position:absolute;left:1596px;top:518px" width="13" height="10" viewBox="0 0 13 10"><rect x="0.75" y="0.75" width="9.5" height="8" rx="1" fill="#f4f4f4" stroke="#3a3f4a" stroke-width="1.5"/><rect x="3" y="3.2" width="5" height="2.6" fill="none" stroke="#3a3f4a" stroke-width="1.1"/></svg>
<svg style="position:absolute;left:1628px;top:517px" width="14" height="11" viewBox="0 0 14 11"><path d="M3.5 2.5 L10.5 8.5 M10.5 2.5 L3.5 8.5" stroke="#3a3f4a" stroke-width="4" stroke-linecap="square"/><path d="M3.5 2.5 L10.5 8.5 M10.5 2.5 L3.5 8.5" stroke="#f6f6f6" stroke-width="2" stroke-linecap="square"/></svg>
<div style="position:absolute;left:723px;top:534px;width:929px;height:441px;background:#f0f0f0;"></div>
<div style="position:absolute;left:723px;top:534px;width:929px;height:50px;background:linear-gradient(#ffffff 0px,#eef0f7 8px,#d5dbee 9px,#d4d9ec 34px,#e3e7f4 49px);border-bottom:1px solid #a9b2c6;"></div>
<svg style="position:absolute;left:744px;top:538px" width="20" height="26" viewBox="0 0 20 26"><defs><linearGradient id="dr" x1="0" x2="1"><stop offset="0" stop-color="#8f8fc8"/><stop offset="1" stop-color="#d4d4f0"/></linearGradient><linearGradient id="sky" x1="0" y1="0" x2="0" y2="1"><stop offset="0" stop-color="#5ab4e8"/><stop offset="0.55" stop-color="#e8f4c0"/><stop offset="0.6" stop-color="#70c040"/><stop offset="1" stop-color="#4a9a30"/></linearGradient></defs><rect x="9" y="3" width="9" height="19" fill="url(#sky)" stroke="#8080b0" stroke-width="1"/><path d="M1 4 L10 1 L10 25 L1 22 Z" fill="url(#dr)" stroke="#6a6aa0" stroke-width="1"/><circle cx="7.5" cy="13" r="0.9" fill="#fff"/></svg>
<div style="position:absolute;left:604.00px;top:564.52px;width:300px;text-align:center;font-size:11.5px;line-height:15px;color:#101010;font-weight:400;white-space:pre;letter-spacing:-0.15px;">Zamknij</div>
<div style="position:absolute;left:786px;top:538px;width:1px;height:42px;background:#8a90a0;"></div>
<div style="position:absolute;left:795.50px;top:551.52px;font-size:11.5px;line-height:15px;color:#101010;font-weight:400;white-space:pre;letter-spacing:-0.15px;">Typ ważenia</div>
<div style="position:absolute;left:866px;top:549px;width:194px;height:20px;background:#fff;"></div>
<div style="position:absolute;left:868.00px;top:551.45px;font-size:11.7px;line-height:15px;color:#000;font-weight:400;white-space:pre;">Ważenie kruszcu</div>
<div style="position:absolute;left:1043px;top:549px;width:17px;height:20px;background:linear-gradient(#f4f4f4,#dedede);border:1px solid #707070;"></div>
<svg style="position:absolute;left:1047px;top:557px" width="9" height="5" viewBox="0 0 9 5"><path d="M0 0 L9 0 L4.5 5 Z" fill="#000"/></svg>
<div style="position:absolute;left:1067.00px;top:551.52px;font-size:11.5px;line-height:15px;color:#101010;font-weight:400;white-space:pre;letter-spacing:-0.15px;">Seria</div>
<div style="position:absolute;left:1098px;top:549px;width:162px;height:20px;background:#fff;"></div>
<div style="position:absolute;left:1100.00px;top:551.45px;font-size:11.7px;line-height:15px;color:#000;font-weight:400;white-space:pre;">2015/04/08/1</div>
<div style="position:absolute;left:1243px;top:549px;width:17px;height:20px;background:linear-gradient(#f4f4f4,#dedede);border:1px solid #707070;"></div>
<svg style="position:absolute;left:1247px;top:557px" width="9" height="5" viewBox="0 0 9 5"><path d="M0 0 L9 0 L4.5 5 Z" fill="#000"/></svg>
<div style="position:absolute;left:1267.00px;top:551.52px;font-size:11.5px;line-height:15px;color:#101010;font-weight:400;white-space:pre;letter-spacing:-0.15px;">Oś X</div>
<div style="position:absolute;left:1296px;top:549px;width:149px;height:20px;background:#fff;"></div>
<div style="position:absolute;left:1298.00px;top:551.45px;font-size:11.7px;line-height:15px;color:#000;font-weight:400;white-space:pre;">Nr kolejny</div>
<div style="position:absolute;left:1428px;top:549px;width:17px;height:20px;background:linear-gradient(#f4f4f4,#dedede);border:1px solid #707070;"></div>
<svg style="position:absolute;left:1432px;top:557px" width="9" height="5" viewBox="0 0 9 5"><path d="M0 0 L9 0 L4.5 5 Z" fill="#000"/></svg>
<div style="position:absolute;left:1448px;top:538px;width:1px;height:42px;background:#8a90a0;"></div>
<svg style="position:absolute;left:1471px;top:540px" width="23" height="23" viewBox="0 0 23 23"><defs><linearGradient id="ra" x1="0" y1="0" x2="1" y2="1"><stop offset="0" stop-color="#90e880"/><stop offset="1" stop-color="#3cae3c"/></linearGradient></defs><path d="M7.9 4.3 L12.2 0.2 L12.2 2.4 Q18.8 3.2 20 12 Q17.5 7.5 12.2 6.8 L12.2 8.8 Z" fill="url(#ra)" stroke="#2f8f2f" stroke-width="0.7" stroke-linejoin="round"/><path d="M7.9 4.3 L12.2 0.2 L12.2 2.4 Q18.8 3.2 20 12 Q17.5 7.5 12.2 6.8 L12.2 8.8 Z" transform="rotate(180 10.3 10.3)" fill="url(#ra)" stroke="#2f8f2f" stroke-width="0.7" stroke-linejoin="round"/></svg>
<div style="position:absolute;left:1331.00px;top:564.52px;width:300px;text-align:center;font-size:11.5px;line-height:15px;color:#101010;font-weight:400;white-space:pre;letter-spacing:-0.15px;">Odśwież</div>
<div style="position:absolute;left:723px;top:611px;width:929px;height:1px;background:#a0a0a0;"></div>
<svg style="position:absolute;left:723px;top:590px" width="85" height="23" viewBox="0 0 85 23"><defs><linearGradient id="tgd" x1="0" y1="0" x2="0" y2="1"><stop offset="0" stop-color="#fbfbfb"/><stop offset="1" stop-color="#dadada"/></linearGradient></defs><path d="M0.5 22 L21.5 0.5 L80.5 0.5 Q83.5 0.5 83.5 3.5 L83.5 22" fill="url(#tgd)" stroke="#9c9c9c" stroke-width="1"/></svg>
<svg style="position:absolute;left:797px;top:590px" width="85" height="23" viewBox="0 0 85 23"><defs><linearGradient id="tge" x1="0" y1="0" x2="0" y2="1"><stop offset="0" stop-color="#fbfbfb"/><stop offset="1" stop-color="#dadada"/></linearGradient></defs><path d="M0.5 22 L20.5 0.5 L80.5 0.5 Q83.5 0.5 83.5 3.5 L83.5 22" fill="#f7f7f7" stroke="#9c9c9c" stroke-width="1"/><path d="M20.5 0.5 L80.5 0.5 Q83.5 0.5 83.5 3.5 L83.5 4 L17 4 Z" fill="#3b90ee"/></svg>
<svg style="position:absolute;left:744px;top:596px" width="17" height="14" viewBox="0 0 17 14"><rect x="0.5" y="0.5" width="15" height="12" fill="#e8f2fc" stroke="#1a3a9a"/><rect x="1" y="1" width="14" height="2" fill="#2d62c8"/><rect x="4" y="6" width="1.5" height="1.5" fill="#e03020"/><rect x="7" y="5" width="1.5" height="1.5" fill="#20a030"/><rect x="10" y="7" width="1.5" height="1.5" fill="#e03020"/><rect x="12" y="5" width="1.5" height="1.5" fill="#20a030"/><rect x="3" y="9" width="1.5" height="1.5" fill="#20a030"/><rect x="8" y="9" width="1.5" height="1.5" fill="#20a030"/></svg>
<div style="position:absolute;left:762.00px;top:595.19px;font-size:11px;line-height:14px;color:#101010;font-weight:400;white-space:pre;">Ważenia</div>
<svg style="position:absolute;left:817px;top:596px" width="17" height="14" viewBox="0 0 17 14"><rect x="0.5" y="0.5" width="15" height="12" fill="#d0e8fa" stroke="#1a3a9a"/><rect x="1" y="1" width="14" height="2" fill="#2d62c8"/><path d="M2 10 Q6 3 9 6 Q12 10 14 6" fill="none" stroke="#e03020" stroke-width="1.2"/><path d="M2 11 Q6 5 9 8 Q12 11 14 8" fill="none" stroke="#20a030" stroke-width="1.2"/></svg>
<div style="position:absolute;left:835.00px;top:595.19px;font-size:11px;line-height:14px;color:#101010;font-weight:400;white-space:pre;">Wykresy</div>
<div style="position:absolute;left:834px;top:595px;width:46px;height:16px;border:1px dotted #000;"></div>
<div style="position:absolute;left:723px;top:611px;width:28px;height:364px;background:linear-gradient(#f4f6fb 0px,#eaedf6 8px,#d6dbee 9px,#d5daed 340px,#e4e8f4 364px);border-right:1px solid #a0a0a0;"></div>
<svg style="position:absolute;left:729px;top:618px" width="17" height="17" viewBox="0 0 17 17"><line x1="2" y1="15" x2="8" y2="9" stroke="#d8b040" stroke-width="4" stroke-linecap="round"/><line x1="2" y1="15" x2="8" y2="9" stroke="#f4e090" stroke-width="1.5" stroke-linecap="round"/><circle cx="11" cy="6" r="5" fill="#f0f8ff" stroke="#90b0d0" stroke-width="1.2"/><path d="M8 6 L14 6 M11 3 L11 9" stroke="#e04848" stroke-width="2.4"/></svg>
<svg style="position:absolute;left:729px;top:642px" width="17" height="17" viewBox="0 0 17 17"><line x1="2" y1="15" x2="8" y2="9" stroke="#d8b040" stroke-width="4" stroke-linecap="round"/><line x1="2" y1="15" x2="8" y2="9" stroke="#f4e090" stroke-width="1.5" stroke-linecap="round"/><circle cx="11" cy="6" r="5" fill="#f0f8ff" stroke="#90b0d0" stroke-width="1.2"/><path d="M8 6 L14 6" stroke="#e04848" stroke-width="2.4"/></svg>
<svg style="position:absolute;left:729px;top:668px" width="16" height="13" viewBox="0 0 16 13"><rect x="0.6" y="0.6" width="14.8" height="11.8" fill="#f8fbff" stroke="#4a90e8" stroke-width="1.2"/><rect x="1" y="1" width="14" height="1.6" fill="#5aa0f0"/><path d="M8 7.5 L3 7.5 A5 3.2 0 0 1 8 4.3 Z" fill="#e86060"/><path d="M8 7.5 L8 4.3 A5 3.2 0 0 1 12.6 6 Z" fill="#f0a030"/><path d="M8 7.5 L12.6 6 A5 3.2 0 0 1 10 10.4 Z" fill="#60b848"/><path d="M8 7.5 L10 10.4 A5 3.2 0 0 1 3 7.5 Z" fill="#8080e0"/></svg>
<div style="position:absolute;left:727px;top:688px;width:20px;height:1px;background:#8a90a0;"></div>
<svg style="position:absolute;left:730px;top:696px" width="14" height="14" viewBox="0 0 14 14"><rect x="0.5" y="0.5" width="13" height="13" rx="1.2" fill="#8c8cd8" stroke="#7676c4"/><rect x="3" y="0.5" width="8" height="6.5" fill="#ffffff"/><line x1="4" y1="2.6" x2="10" y2="2.6" stroke="#b8b8c8" stroke-width="0.7"/><line x1="4" y1="4.8" x2="10" y2="4.8" stroke="#b8b8c8" stroke-width="0.7"/><rect x="3.5" y="9" width="6.5" height="4.5" fill="#f4f4f8"/><rect x="4.5" y="9.8" width="1.8" height="3.4" fill="#5a5ab4"/></svg>
<div style="position:absolute;left:798px;top:626px;width:828px;height:262px;background:#fff;border:1px solid #000;border-left-width:1.5px;border-bottom-width:1.5px;"></div>
<svg style="position:absolute;left:794px;top:622px" width="8" height="270" viewBox="0 0 8 270"><line x1="2" y1="263.5" x2="4" y2="263.5" stroke="#000" stroke-width="1"/><line x1="0" y1="259.5" x2="4" y2="259.5" stroke="#000" stroke-width="1"/><line x1="2" y1="254.5" x2="4" y2="254.5" stroke="#000" stroke-width="1"/><line x1="2" y1="249.5" x2="4" y2="249.5" stroke="#000" stroke-width="1"/><line x1="2" y1="244.5" x2="4" y2="244.5" stroke="#000" stroke-width="1"/><line x1="0" y1="239.5" x2="4" y2="239.5" stroke="#000" stroke-width="1"/><line x1="2" y1="235.5" x2="4" y2="235.5" stroke="#000" stroke-width="1"/><line x1="2" y1="230.5" x2="4" y2="230.5" stroke="#000" stroke-width="1"/><line x1="2" y1="225.5" x2="4" y2="225.5" stroke="#000" stroke-width="1"/><line x1="0" y1="220.5" x2="4" y2="220.5" stroke="#000" stroke-width="1"/><line x1="2" y1="215.5" x2="4" y2="215.5" stroke="#000" stroke-width="1"/><line x1="2" y1="211.5" x2="4" y2="211.5" stroke="#000" stroke-width="1"/><line x1="2" y1="206.5" x2="4" y2="206.5" stroke="#000" stroke-width="1"/><line x1="0" y1="201.5" x2="4" y2="201.5" stroke="#000" stroke-width="1"/><line x1="2" y1="196.5" x2="4" y2="196.5" stroke="#000" stroke-width="1"/><line x1="2" y1="191.5" x2="4" y2="191.5" stroke="#000" stroke-width="1"/><line x1="2" y1="187.5" x2="4" y2="187.5" stroke="#000" stroke-width="1"/><line x1="0" y1="182.5" x2="4" y2="182.5" stroke="#000" stroke-width="1"/><line x1="2" y1="177.5" x2="4" y2="177.5" stroke="#000" stroke-width="1"/><line x1="2" y1="172.5" x2="4" y2="172.5" stroke="#000" stroke-width="1"/><line x1="2" y1="168.5" x2="4" y2="168.5" stroke="#000" stroke-width="1"/><line x1="0" y1="163.5" x2="4" y2="163.5" stroke="#000" stroke-width="1"/><line x1="2" y1="158.5" x2="4" y2="158.5" stroke="#000" stroke-width="1"/><line x1="2" y1="153.5" x2="4" y2="153.5" stroke="#000" stroke-width="1"/><line x1="2" y1="148.5" x2="4" y2="148.5" stroke="#000" stroke-width="1"/><line x1="0" y1="144.5" x2="4" y2="144.5" stroke="#000" stroke-width="1"/><line x1="2" y1="139.5" x2="4" y2="139.5" stroke="#000" stroke-width="1"/><line x1="2" y1="134.5" x2="4" y2="134.5" stroke="#000" stroke-width="1"/><line x1="2" y1="129.5" x2="4" y2="129.5" stroke="#000" stroke-width="1"/><line x1="0" y1="124.5" x2="4" y2="124.5" stroke="#000" stroke-width="1"/><line x1="2" y1="120.5" x2="4" y2="120.5" stroke="#000" stroke-width="1"/><line x1="2" y1="115.5" x2="4" y2="115.5" stroke="#000" stroke-width="1"/><line x1="2" y1="110.5" x2="4" y2="110.5" stroke="#000" stroke-width="1"/><line x1="0" y1="105.5" x2="4" y2="105.5" stroke="#000" stroke-width="1"/><line x1="2" y1="100.5" x2="4" y2="100.5" stroke="#000" stroke-width="1"/><line x1="2" y1="96.5" x2="4" y2="96.5" stroke="#000" stroke-width="1"/><line x1="2" y1="91.5" x2="4" y2="91.5" stroke="#000" stroke-width="1"/><line x1="0" y1="86.5" x2="4" y2="86.5" stroke="#000" stroke-width="1"/><line x1="2" y1="81.5" x2="4" y2="81.5" stroke="#000" stroke-width="1"/><line x1="2" y1="77.5" x2="4" y2="77.5" stroke="#000" stroke-width="1"/><line x1="2" y1="72.5" x2="4" y2="72.5" stroke="#000" stroke-width="1"/><line x1="0" y1="67.5" x2="4" y2="67.5" stroke="#000" stroke-width="1"/><line x1="2" y1="62.5" x2="4" y2="62.5" stroke="#000" stroke-width="1"/><line x1="2" y1="57.5" x2="4" y2="57.5" stroke="#000" stroke-width="1"/><line x1="2" y1="53.5" x2="4" y2="53.5" stroke="#000" stroke-width="1"/><line x1="0" y1="48.5" x2="4" y2="48.5" stroke="#000" stroke-width="1"/><line x1="2" y1="43.5" x2="4" y2="43.5" stroke="#000" stroke-width="1"/><line x1="2" y1="38.5" x2="4" y2="38.5" stroke="#000" stroke-width="1"/><line x1="2" y1="33.5" x2="4" y2="33.5" stroke="#000" stroke-width="1"/><line x1="0" y1="29.5" x2="4" y2="29.5" stroke="#000" stroke-width="1"/><line x1="2" y1="24.5" x2="4" y2="24.5" stroke="#000" stroke-width="1"/><line x1="2" y1="19.5" x2="4" y2="19.5" stroke="#000" stroke-width="1"/><line x1="2" y1="14.5" x2="4" y2="14.5" stroke="#000" stroke-width="1"/><line x1="0" y1="9.5" x2="4" y2="9.5" stroke="#000" stroke-width="1"/><line x1="2" y1="5.5" x2="4" y2="5.5" stroke="#000" stroke-width="1"/></svg>
<div style="position:absolute;left:733.00px;top:874.06px;width:60px;text-align:right;font-size:10.5px;line-height:14px;color:#000;font-weight:400;white-space:pre;">400</div>
<div style="position:absolute;left:733.00px;top:854.91px;width:60px;text-align:right;font-size:10.5px;line-height:14px;color:#000;font-weight:400;white-space:pre;">500</div>
<div style="position:absolute;left:733.00px;top:835.75px;width:60px;text-align:right;font-size:10.5px;line-height:14px;color:#000;font-weight:400;white-space:pre;">600</div>
<div style="position:absolute;left:733.00px;top:816.60px;width:60px;text-align:right;font-size:10.5px;line-height:14px;color:#000;font-weight:400;white-space:pre;">700</div>
<div style="position:absolute;left:733.00px;top:797.45px;width:60px;text-align:right;font-size:10.5px;line-height:14px;color:#000;font-weight:400;white-space:pre;">800</div>
<div style="position:absolute;left:733.00px;top:778.29px;width:60px;text-align:right;font-size:10.5px;line-height:14px;color:#000;font-weight:400;white-space:pre;">900</div>
<div style="position:absolute;left:733.00px;top:759.14px;width:60px;text-align:right;font-size:10.5px;line-height:14px;color:#000;font-weight:400;white-space:pre;">1 000</div>
<div style="position:absolute;left:733.00px;top:739.98px;width:60px;text-align:right;font-size:10.5px;line-height:14px;color:#000;font-weight:400;white-space:pre;">1 100</div>
<div style="position:absolute;left:733.00px;top:720.83px;width:60px;text-align:right;font-size:10.5px;line-height:14px;color:#000;font-weight:400;white-space:pre;">1 200</div>
<div style="position:absolute;left:733.00px;top:701.68px;width:60px;text-align:right;font-size:10.5px;line-height:14px;color:#000;font-weight:400;white-space:pre;">1 300</div>
<div style="position:absolute;left:733.00px;top:682.52px;width:60px;text-align:right;font-size:10.5px;line-height:14px;color:#000;font-weight:400;white-space:pre;">1 400</div>
<div style="position:absolute;left:733.00px;top:663.37px;width:60px;text-align:right;font-size:10.5px;line-height:14px;color:#000;font-weight:400;white-space:pre;">1 500</div>
<div style="position:absolute;left:733.00px;top:644.21px;width:60px;text-align:right;font-size:10.5px;line-height:14px;color:#000;font-weight:400;white-space:pre;">1 600</div>
<div style="position:absolute;left:733.00px;top:625.06px;width:60px;text-align:right;font-size:10.5px;line-height:14px;color:#000;font-weight:400;white-space:pre;">1 700</div>
<svg style="position:absolute;left:794px;top:888px" width="836" height="8" viewBox="0 0 836 8"><line x1="14.5" y1="0" x2="14.5" y2="5" stroke="#000" stroke-width="1"/><line x1="29.5" y1="0" x2="29.5" y2="3" stroke="#000" stroke-width="1"/><line x1="45.5" y1="0" x2="45.5" y2="3" stroke="#000" stroke-width="1"/><line x1="60.5" y1="0" x2="60.5" y2="3" stroke="#000" stroke-width="1"/><line x1="76.5" y1="0" x2="76.5" y2="5" stroke="#000" stroke-width="1"/><line x1="91.5" y1="0" x2="91.5" y2="3" stroke="#000" stroke-width="1"/><line x1="107.5" y1="0" x2="107.5" y2="3" stroke="#000" stroke-width="1"/><line x1="122.5" y1="0" x2="122.5" y2="3" stroke="#000" stroke-width="1"/><line x1="138.5" y1="0" x2="138.5" y2="5" stroke="#000" stroke-width="1"/><line x1="153.5" y1="0" x2="153.5" y2="3" stroke="#000" stroke-width="1"/><line x1="169.5" y1="0" x2="169.5" y2="3" stroke="#000" stroke-width="1"/><line x1="184.5" y1="0" x2="184.5" y2="3" stroke="#000" stroke-width="1"/><line x1="200.5" y1="0" x2="200.5" y2="5" stroke="#000" stroke-width="1"/><line x1="215.5" y1="0" x2="215.5" y2="3" stroke="#000" stroke-width="1"/><line x1="231.5" y1="0" x2="231.5" y2="3" stroke="#000" stroke-width="1"/><line x1="246.5" y1="0" x2="246.5" y2="3" stroke="#000" stroke-width="1"/><line x1="262.5" y1="0" x2="262.5" y2="5" stroke="#000" stroke-width="1"/><line x1="277.5" y1="0" x2="277.5" y2="3" stroke="#000" stroke-width="1"/><line x1="293.5" y1="0" x2="293.5" y2="3" stroke="#000" stroke-width="1"/><line x1="308.5" y1="0" x2="308.5" y2="3" stroke="#000" stroke-width="1"/><line x1="324.5" y1="0" x2="324.5" y2="5" stroke="#000" stroke-width="1"/><line x1="339.5" y1="0" x2="339.5" y2="3" stroke="#000" stroke-width="1"/><line x1="355.5" y1="0" x2="355.5" y2="3" stroke="#000" stroke-width="1"/><line x1="370.5" y1="0" x2="370.5" y2="3" stroke="#000" stroke-width="1"/><line x1="386.5" y1="0" x2="386.5" y2="5" stroke="#000" stroke-width="1"/><line x1="402.5" y1="0" x2="402.5" y2="3" stroke="#000" stroke-width="1"/><line x1="417.5" y1="0" x2="417.5" y2="3" stroke="#000" stroke-width="1"/><line x1="433.5" y1="0" x2="433.5" y2="3" stroke="#000" stroke-width="1"/><line x1="448.5" y1="0" x2="448.5" y2="5" stroke="#000" stroke-width="1"/><line x1="464.5" y1="0" x2="464.5" y2="3" stroke="#000" stroke-width="1"/><line x1="479.5" y1="0" x2="479.5" y2="3" stroke="#000" stroke-width="1"/><line x1="495.5" y1="0" x2="495.5" y2="3" stroke="#000" stroke-width="1"/><line x1="510.5" y1="0" x2="510.5" y2="5" stroke="#000" stroke-width="1"/><line x1="526.5" y1="0" x2="526.5" y2="3" stroke="#000" stroke-width="1"/><line x1="541.5" y1="0" x2="541.5" y2="3" stroke="#000" stroke-width="1"/><line x1="557.5" y1="0" x2="557.5" y2="3" stroke="#000" stroke-width="1"/><line x1="572.5" y1="0" x2="572.5" y2="5" stroke="#000" stroke-width="1"/><line x1="588.5" y1="0" x2="588.5" y2="3" stroke="#000" stroke-width="1"/><line x1="603.5" y1="0" x2="603.5" y2="3" stroke="#000" stroke-width="1"/><line x1="619.5" y1="0" x2="619.5" y2="3" stroke="#000" stroke-width="1"/><line x1="634.5" y1="0" x2="634.5" y2="5" stroke="#000" stroke-width="1"/><line x1="650.5" y1="0" x2="650.5" y2="3" stroke="#000" stroke-width="1"/><line x1="665.5" y1="0" x2="665.5" y2="3" stroke="#000" stroke-width="1"/><line x1="681.5" y1="0" x2="681.5" y2="3" stroke="#000" stroke-width="1"/><line x1="696.5" y1="0" x2="696.5" y2="5" stroke="#000" stroke-width="1"/><line x1="712.5" y1="0" x2="712.5" y2="3" stroke="#000" stroke-width="1"/><line x1="727.5" y1="0" x2="727.5" y2="3" stroke="#000" stroke-width="1"/><line x1="743.5" y1="0" x2="743.5" y2="3" stroke="#000" stroke-width="1"/><line x1="758.5" y1="0" x2="758.5" y2="5" stroke="#000" stroke-width="1"/><line x1="774.5" y1="0" x2="774.5" y2="3" stroke="#000" stroke-width="1"/><line x1="789.5" y1="0" x2="789.5" y2="3" stroke="#000" stroke-width="1"/><line x1="805.5" y1="0" x2="805.5" y2="3" stroke="#000" stroke-width="1"/><line x1="820.5" y1="0" x2="820.5" y2="5" stroke="#000" stroke-width="1"/></svg>
<div style="position:absolute;left:793.20px;top:891.36px;width:30px;text-align:center;font-size:10.5px;line-height:14px;color:#000;font-weight:400;white-space:pre;">0</div>
<div style="position:absolute;left:855.25px;top:891.36px;width:30px;text-align:center;font-size:10.5px;line-height:14px;color:#000;font-weight:400;white-space:pre;">1</div>
<div style="position:absolute;left:917.30px;top:891.36px;width:30px;text-align:center;font-size:10.5px;line-height:14px;color:#000;font-weight:400;white-space:pre;">2</div>
<div style="position:absolute;left:979.35px;top:891.36px;width:30px;text-align:center;font-size:10.5px;line-height:14px;color:#000;font-weight:400;white-space:pre;">3</div>
<div style="position:absolute;left:1041.40px;top:891.36px;width:30px;text-align:center;font-size:10.5px;line-height:14px;color:#000;font-weight:400;white-space:pre;">4</div>
<div style="position:absolute;left:1103.45px;top:891.36px;width:30px;text-align:center;font-size:10.5px;line-height:14px;color:#000;font-weight:400;white-space:pre;">5</div>
<div style="position:absolute;left:1165.50px;top:891.36px;width:30px;text-align:center;font-size:10.5px;line-height:14px;color:#000;font-weight:400;white-space:pre;">6</div>
<div style="position:absolute;left:1227.55px;top:891.36px;width:30px;text-align:center;font-size:10.5px;line-height:14px;color:#000;font-weight:400;white-space:pre;">7</div>
<div style="position:absolute;left:1289.60px;top:891.36px;width:30px;text-align:center;font-size:10.5px;line-height:14px;color:#000;font-weight:400;white-space:pre;">8</div>
<div style="position:absolute;left:1351.65px;top:891.36px;width:30px;text-align:center;font-size:10.5px;line-height:14px;color:#000;font-weight:400;white-space:pre;">9</div>
<div style="position:absolute;left:1413.70px;top:891.36px;width:30px;text-align:center;font-size:10.5px;line-height:14px;color:#000;font-weight:400;white-space:pre;">10</div>
<div style="position:absolute;left:1475.75px;top:891.36px;width:30px;text-align:center;font-size:10.5px;line-height:14px;color:#000;font-weight:400;white-space:pre;">11</div>
<div style="position:absolute;left:1537.80px;top:891.36px;width:30px;text-align:center;font-size:10.5px;line-height:14px;color:#000;font-weight:400;white-space:pre;">12</div>
<div style="position:absolute;left:1599.85px;top:891.36px;width:30px;text-align:center;font-size:10.5px;line-height:14px;color:#000;font-weight:400;white-space:pre;">13</div>
<div style="position:absolute;left:1160.50px;top:905.36px;width:100px;text-align:center;font-size:10.5px;line-height:14px;color:#000;font-weight:400;white-space:pre;">Nr kolejny</div>
<div style="position:absolute;left:757px;top:757px;width:0;height:0;"><div style="position:absolute;left:-50px;top:-7px;width:100px;height:14px;line-height:14px;text-align:center;font-size:10.5px;color:#000;transform:rotate(-90deg);white-space:pre;">Wartość netto</div></div>
<svg style="position:absolute;left:798px;top:626px" width="828" height="262" viewBox="0 0 828 262"><polyline points="72.50,235.50 134.50,235.50 196.50,120.50 258.50,120.50 320.50,25.50 382.50,82.50 445.50,101.50 507.50,159.50 569.50,151.50 631.50,170.50 693.50,141.50 755.50,141.50" fill="none" stroke="#f00000" stroke-width="1.1"/><path d="M72.50 232.20 L75.80 235.50 L72.50 238.80 L69.20 235.50 Z" fill="#f00000" stroke="#000" stroke-width="0.9"/><path d="M134.50 232.20 L137.80 235.50 L134.50 238.80 L131.20 235.50 Z" fill="#f00000" stroke="#000" stroke-width="0.9"/><path d="M196.50 117.20 L199.80 120.50 L196.50 123.80 L193.20 120.50 Z" fill="#f00000" stroke="#000" stroke-width="0.9"/><path d="M258.50 117.20 L261.80 120.50 L258.50 123.80 L255.20 120.50 Z" fill="#f00000" stroke="#000" stroke-width="0.9"/><path d="M320.50 22.20 L323.80 25.50 L320.50 28.80 L317.20 25.50 Z" fill="#f00000" stroke="#000" stroke-width="0.9"/><path d="M382.50 79.20 L385.80 82.50 L382.50 85.80 L379.20 82.50 Z" fill="#f00000" stroke="#000" stroke-width="0.9"/><path d="M445.50 98.20 L448.80 101.50 L445.50 104.80 L442.20 101.50 Z" fill="#f00000" stroke="#000" stroke-width="0.9"/><path d="M507.50 156.20 L510.80 159.50 L507.50 162.80 L504.20 159.50 Z" fill="#f00000" stroke="#000" stroke-width="0.9"/><path d="M569.50 148.20 L572.80 151.50 L569.50 154.80 L566.20 151.50 Z" fill="#f00000" stroke="#000" stroke-width="0.9"/><path d="M631.50 167.20 L634.80 170.50 L631.50 173.80 L628.20 170.50 Z" fill="#f00000" stroke="#000" stroke-width="0.9"/><path d="M693.50 138.20 L696.80 141.50 L693.50 144.80 L690.20 141.50 Z" fill="#f00000" stroke="#000" stroke-width="0.9"/><path d="M755.50 138.20 L758.80 141.50 L755.50 144.80 L752.20 141.50 Z" fill="#f00000" stroke="#000" stroke-width="0.9"/></svg>
<div style="position:absolute;left:1214px;top:932px;width:110px;height:24px;background:#fff;border:1.5px solid #000;box-shadow:3px 3px 3px rgba(0,0,0,0.9);"></div>
<div style="position:absolute;left:1218px;top:937px;width:12px;height:12px;background:#fff;border:1px solid #a0a0a0;box-shadow:inset 1px 1px 0 #606060;"></div>
<svg style="position:absolute;left:1219px;top:938px" width="10" height="10" viewBox="0 0 10 10"><path d="M1.8 5 L4 7.8 L8.5 2" fill="none" stroke="#000" stroke-width="2"/></svg>
<svg style="position:absolute;left:1234px;top:939px" width="14" height="9" viewBox="0 0 14 9"><line x1="0" y1="4.5" x2="14" y2="4.5" stroke="#f00" stroke-width="1.1"/><path d="M7 1.3 L10.2 4.5 L7 7.7 L3.8 4.5 Z" fill="#f00" stroke="#000" stroke-width="0.9"/></svg>
<div style="position:absolute;left:1254.00px;top:936.36px;font-size:10.5px;line-height:14px;color:#000;font-weight:400;white-space:pre;">2015/04/08/1</div>
</body></html>
